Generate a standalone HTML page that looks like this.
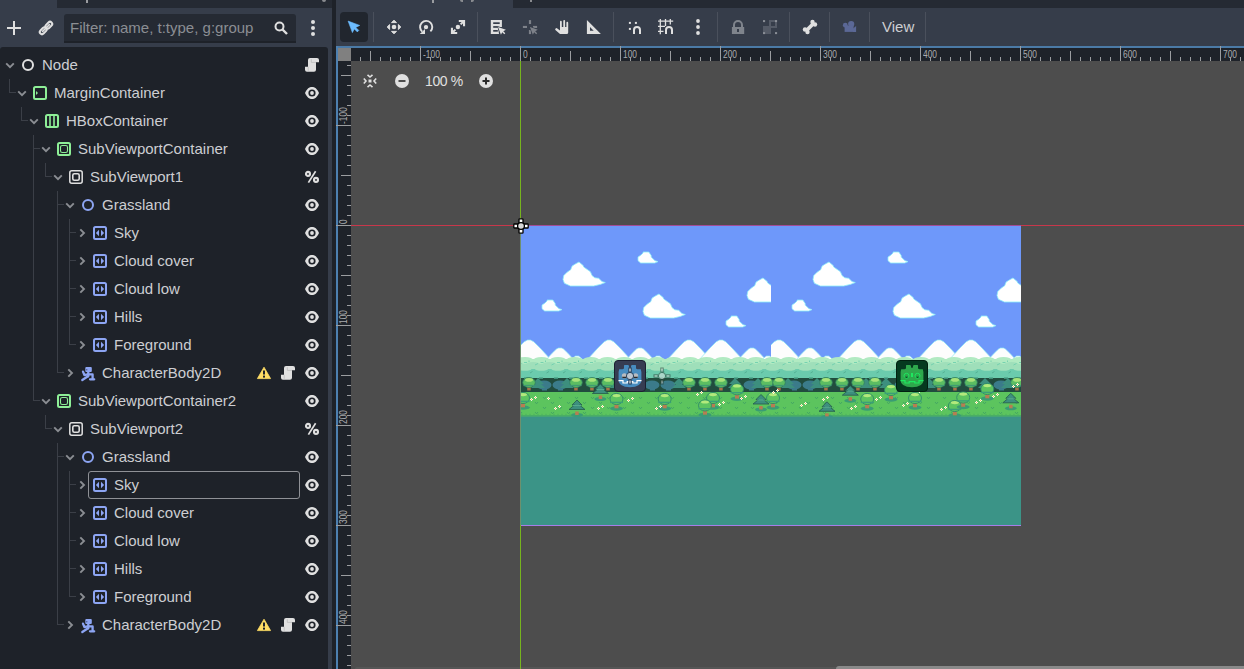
<!DOCTYPE html><html><head><meta charset="utf-8"><style>
*{margin:0;padding:0;box-sizing:border-box}
html,body{width:1244px;height:669px;overflow:hidden;background:#363d4a;font-family:"Liberation Sans", sans-serif}
.ab{position:absolute}
svg{position:absolute;overflow:visible}
.t{position:absolute;white-space:nowrap;color:#cdced2;font-size:15px;line-height:18px}
</style></head><body>
<div class="ab" style="left:57px;top:0;width:275px;height:8px;background:#252a33"></div>
<div class="ab" style="left:86px;top:0;width:2px;height:3px;background:#9a9ca0"></div>
<div class="ab" style="left:322px;top:0;width:4px;height:2px;border-radius:0 0 2px 2px;background:#8a8c90"></div>
<svg style="left:0;top:0" width="1" height="1"><path d="M14 21v14M7 28h14" stroke="#e0e0e0" stroke-width="2"/></svg>
<svg style="left:39px;top:21px" width="14" height="14" viewBox="0 0 14 14"><g stroke-linecap="round" fill="none"><path d="M8.6 5.4L11 3" stroke="#e0e0e0" stroke-width="6.4"/><path d="M8.6 5.4L11 3" stroke="#363d4a" stroke-width="2.4"/><path d="M3 11L5.4 8.6" stroke="#e0e0e0" stroke-width="6.4"/><path d="M3 11L5.4 8.6" stroke="#363d4a" stroke-width="2.4"/><path d="M3.6 10.4L10.4 3.6" stroke="#e0e0e0" stroke-width="1.7"/></g></svg>
<div class="ab" style="left:64px;top:14px;width:232px;height:29px;background:#252a33;border-bottom:2px solid #1e2229;border-radius:3px 3px 0 0"></div>
<div class="t" style="left:70px;top:19px;color:#8b8e93">Filter: name, t:type, g:group</div>
<svg style="left:274px;top:21px" width="14" height="14" viewBox="0 0 14 14"><circle cx="5.5" cy="5.5" r="4" fill="none" stroke="#e0e0e0" stroke-width="2"/><path d="M8.5 8.5l4.5 4.5" stroke="#e0e0e0" stroke-width="2.4"/></svg>
<div class="ab" style="left:311px;top:19.5px;width:4px;height:4px;border-radius:2px;background:#e0e0e0"></div>
<div class="ab" style="left:311px;top:25.5px;width:4px;height:4px;border-radius:2px;background:#e0e0e0"></div>
<div class="ab" style="left:311px;top:31.5px;width:4px;height:4px;border-radius:2px;background:#e0e0e0"></div>
<div class="ab" style="left:0;top:47px;width:328px;height:640px;background:#1e2229;border-radius:3px 3px 0 0"></div>
<div class="ab" style="left:332px;top:0;width:4px;height:669px;background:#1e2229"></div>
<svg style="left:5px;top:61px" width="10" height="8" viewBox="0 0 10 8"><path d="M1.2 2.3l3.8 3.8 3.8-3.8" fill="none" stroke="#8b8e93" stroke-width="1.9"/></svg>
<svg style="left:21px;top:58px" width="14" height="14" viewBox="0 0 14 14"><circle cx="7" cy="7" r="5" fill="none" stroke="#e0e0e0" stroke-width="2"/></svg>
<div class="t" style="left:42px;top:56px">Node</div>
<svg style="left:305px;top:57px" width="14" height="14" viewBox="0 0 14 14"><path d="M3 3a2 2 0 0 1 2-2H12a2 2 0 0 1 2 2V5.2H11V12.7a2 2 0 0 1-2 2H2a2 2 0 0 1-2-2V9.7H3Z" fill="#e0e0e0"/><path d="M6.3 2.2V5.4H11M3.2 9.8V13.8" fill="none" stroke="#b8b8b8" stroke-width="0.7"/></svg>
<svg style="left:17px;top:89px" width="10" height="8" viewBox="0 0 10 8"><path d="M1.2 2.3l3.8 3.8 3.8-3.8" fill="none" stroke="#8b8e93" stroke-width="1.9"/></svg>
<svg style="left:33px;top:86px" width="14" height="14" viewBox="0 0 14 14"><rect x="1" y="1" width="12" height="12" rx="1.5" fill="none" stroke="#8eef97" stroke-width="2"/><path d="M3 5v4l2-2z" fill="#8eef97"/></svg>
<div class="t" style="left:54px;top:84px">MarginContainer</div>
<svg style="left:305px;top:85px" width="14" height="14" viewBox="0 0 14 14"><path d="M0 8C2 3.6 4.2 2 7 2S12 3.6 14 8C12 12.4 9.8 14 7 14S2 12.4 0 8z" fill="#e0e0e0"/><circle cx="7" cy="8" r="3.6" fill="#1e2229"/><circle cx="7" cy="8" r="1.9" fill="#e0e0e0"/></svg>
<svg style="left:29px;top:117px" width="10" height="8" viewBox="0 0 10 8"><path d="M1.2 2.3l3.8 3.8 3.8-3.8" fill="none" stroke="#8b8e93" stroke-width="1.9"/></svg>
<svg style="left:45px;top:114px" width="14" height="14" viewBox="0 0 14 14"><rect x="1" y="1" width="12" height="12" rx="1.5" fill="none" stroke="#8eef97" stroke-width="2"/><path d="M5 2v10M9 2v10" stroke="#8eef97" stroke-width="1.6"/></svg>
<div class="t" style="left:66px;top:112px">HBoxContainer</div>
<svg style="left:305px;top:113px" width="14" height="14" viewBox="0 0 14 14"><path d="M0 8C2 3.6 4.2 2 7 2S12 3.6 14 8C12 12.4 9.8 14 7 14S2 12.4 0 8z" fill="#e0e0e0"/><circle cx="7" cy="8" r="3.6" fill="#1e2229"/><circle cx="7" cy="8" r="1.9" fill="#e0e0e0"/></svg>
<svg style="left:41px;top:145px" width="10" height="8" viewBox="0 0 10 8"><path d="M1.2 2.3l3.8 3.8 3.8-3.8" fill="none" stroke="#8b8e93" stroke-width="1.9"/></svg>
<svg style="left:57px;top:142px" width="14" height="14" viewBox="0 0 14 14"><rect x="1" y="1" width="12" height="12" rx="1.5" fill="none" stroke="#8eef97" stroke-width="2"/><rect x="3.5" y="3.5" width="7" height="7" rx="1.8" fill="none" stroke="#8eef97" stroke-width="1.1"/></svg>
<div class="t" style="left:78px;top:140px">SubViewportContainer</div>
<svg style="left:305px;top:141px" width="14" height="14" viewBox="0 0 14 14"><path d="M0 8C2 3.6 4.2 2 7 2S12 3.6 14 8C12 12.4 9.8 14 7 14S2 12.4 0 8z" fill="#e0e0e0"/><circle cx="7" cy="8" r="3.6" fill="#1e2229"/><circle cx="7" cy="8" r="1.9" fill="#e0e0e0"/></svg>
<svg style="left:53px;top:173px" width="10" height="8" viewBox="0 0 10 8"><path d="M1.2 2.3l3.8 3.8 3.8-3.8" fill="none" stroke="#8b8e93" stroke-width="1.9"/></svg>
<svg style="left:69px;top:170px" width="14" height="14" viewBox="0 0 14 14"><rect x="0.8" y="0.8" width="12.4" height="12.4" rx="2" fill="none" stroke="#e0e0e0" stroke-width="1.5"/><rect x="3.8" y="3.8" width="6.4" height="6.4" rx="1.5" fill="none" stroke="#e0e0e0" stroke-width="1.6"/></svg>
<div class="t" style="left:90px;top:168px">SubViewport1</div>
<svg style="left:305px;top:169px" width="14" height="14" viewBox="0 0 14 14"><g fill="none" stroke="#e0e0e0"><circle cx="3" cy="4.9" r="2" stroke-width="2.1"/><circle cx="11" cy="10.9" r="2" stroke-width="2.1"/><path d="M10.6 2.2L3.4 13.6" stroke-width="1.7"/></g></svg>
<svg style="left:65px;top:201px" width="10" height="8" viewBox="0 0 10 8"><path d="M1.2 2.3l3.8 3.8 3.8-3.8" fill="none" stroke="#8b8e93" stroke-width="1.9"/></svg>
<svg style="left:81px;top:198px" width="14" height="14" viewBox="0 0 14 14"><circle cx="7" cy="7" r="5" fill="none" stroke="#8da5f3" stroke-width="2"/></svg>
<div class="t" style="left:102px;top:196px">Grassland</div>
<svg style="left:305px;top:197px" width="14" height="14" viewBox="0 0 14 14"><path d="M0 8C2 3.6 4.2 2 7 2S12 3.6 14 8C12 12.4 9.8 14 7 14S2 12.4 0 8z" fill="#e0e0e0"/><circle cx="7" cy="8" r="3.6" fill="#1e2229"/><circle cx="7" cy="8" r="1.9" fill="#e0e0e0"/></svg>
<svg style="left:78px;top:228px" width="8" height="10" viewBox="0 0 8 10"><path d="M2.3 1.3l3.7 3.7-3.7 3.7" fill="none" stroke="#8b8e93" stroke-width="1.9"/></svg>
<svg style="left:93px;top:226px" width="14" height="14" viewBox="0 0 14 14"><rect x="1" y="1" width="12" height="12" rx="1.5" fill="none" stroke="#8da5f3" stroke-width="2"/><path d="M6 3.8v6.4L2.9 7zM8 3.8v6.4L11.1 7z" fill="#8da5f3"/></svg>
<div class="t" style="left:114px;top:224px">Sky</div>
<svg style="left:305px;top:225px" width="14" height="14" viewBox="0 0 14 14"><path d="M0 8C2 3.6 4.2 2 7 2S12 3.6 14 8C12 12.4 9.8 14 7 14S2 12.4 0 8z" fill="#e0e0e0"/><circle cx="7" cy="8" r="3.6" fill="#1e2229"/><circle cx="7" cy="8" r="1.9" fill="#e0e0e0"/></svg>
<svg style="left:78px;top:256px" width="8" height="10" viewBox="0 0 8 10"><path d="M2.3 1.3l3.7 3.7-3.7 3.7" fill="none" stroke="#8b8e93" stroke-width="1.9"/></svg>
<svg style="left:93px;top:254px" width="14" height="14" viewBox="0 0 14 14"><rect x="1" y="1" width="12" height="12" rx="1.5" fill="none" stroke="#8da5f3" stroke-width="2"/><path d="M6 3.8v6.4L2.9 7zM8 3.8v6.4L11.1 7z" fill="#8da5f3"/></svg>
<div class="t" style="left:114px;top:252px">Cloud cover</div>
<svg style="left:305px;top:253px" width="14" height="14" viewBox="0 0 14 14"><path d="M0 8C2 3.6 4.2 2 7 2S12 3.6 14 8C12 12.4 9.8 14 7 14S2 12.4 0 8z" fill="#e0e0e0"/><circle cx="7" cy="8" r="3.6" fill="#1e2229"/><circle cx="7" cy="8" r="1.9" fill="#e0e0e0"/></svg>
<svg style="left:78px;top:284px" width="8" height="10" viewBox="0 0 8 10"><path d="M2.3 1.3l3.7 3.7-3.7 3.7" fill="none" stroke="#8b8e93" stroke-width="1.9"/></svg>
<svg style="left:93px;top:282px" width="14" height="14" viewBox="0 0 14 14"><rect x="1" y="1" width="12" height="12" rx="1.5" fill="none" stroke="#8da5f3" stroke-width="2"/><path d="M6 3.8v6.4L2.9 7zM8 3.8v6.4L11.1 7z" fill="#8da5f3"/></svg>
<div class="t" style="left:114px;top:280px">Cloud low</div>
<svg style="left:305px;top:281px" width="14" height="14" viewBox="0 0 14 14"><path d="M0 8C2 3.6 4.2 2 7 2S12 3.6 14 8C12 12.4 9.8 14 7 14S2 12.4 0 8z" fill="#e0e0e0"/><circle cx="7" cy="8" r="3.6" fill="#1e2229"/><circle cx="7" cy="8" r="1.9" fill="#e0e0e0"/></svg>
<svg style="left:78px;top:312px" width="8" height="10" viewBox="0 0 8 10"><path d="M2.3 1.3l3.7 3.7-3.7 3.7" fill="none" stroke="#8b8e93" stroke-width="1.9"/></svg>
<svg style="left:93px;top:310px" width="14" height="14" viewBox="0 0 14 14"><rect x="1" y="1" width="12" height="12" rx="1.5" fill="none" stroke="#8da5f3" stroke-width="2"/><path d="M6 3.8v6.4L2.9 7zM8 3.8v6.4L11.1 7z" fill="#8da5f3"/></svg>
<div class="t" style="left:114px;top:308px">Hills</div>
<svg style="left:305px;top:309px" width="14" height="14" viewBox="0 0 14 14"><path d="M0 8C2 3.6 4.2 2 7 2S12 3.6 14 8C12 12.4 9.8 14 7 14S2 12.4 0 8z" fill="#e0e0e0"/><circle cx="7" cy="8" r="3.6" fill="#1e2229"/><circle cx="7" cy="8" r="1.9" fill="#e0e0e0"/></svg>
<svg style="left:78px;top:340px" width="8" height="10" viewBox="0 0 8 10"><path d="M2.3 1.3l3.7 3.7-3.7 3.7" fill="none" stroke="#8b8e93" stroke-width="1.9"/></svg>
<svg style="left:93px;top:338px" width="14" height="14" viewBox="0 0 14 14"><rect x="1" y="1" width="12" height="12" rx="1.5" fill="none" stroke="#8da5f3" stroke-width="2"/><path d="M6 3.8v6.4L2.9 7zM8 3.8v6.4L11.1 7z" fill="#8da5f3"/></svg>
<div class="t" style="left:114px;top:336px">Foreground</div>
<svg style="left:305px;top:337px" width="14" height="14" viewBox="0 0 14 14"><path d="M0 8C2 3.6 4.2 2 7 2S12 3.6 14 8C12 12.4 9.8 14 7 14S2 12.4 0 8z" fill="#e0e0e0"/><circle cx="7" cy="8" r="3.6" fill="#1e2229"/><circle cx="7" cy="8" r="1.9" fill="#e0e0e0"/></svg>
<svg style="left:66px;top:368px" width="8" height="10" viewBox="0 0 8 10"><path d="M2.3 1.3l3.7 3.7-3.7 3.7" fill="none" stroke="#8b8e93" stroke-width="1.9"/></svg>
<svg style="left:81px;top:366px" width="14" height="14" viewBox="0 0 14 14"><g fill="none" stroke="#8da5f3" stroke-width="2.3" stroke-linecap="round" stroke-linejoin="round"><path d="M2 5.6L3.4 9 7 8.4"/><path d="M7.3 5.5V10.3"/><path d="M7 8.4H11.6V13.3H9M11.6 13.3H13.2"/><path d="M7 10.2L1.3 14"/></g><rect x="4.3" y="0.9" width="6.5" height="5.1" rx="1" fill="#8da5f3"/><rect x="5" y="3" width="1.4" height="1.4" fill="#5a6aa0"/></svg>
<div class="t" style="left:102px;top:364px">CharacterBody2D</div>
<svg style="left:257px;top:365px" width="14" height="14" viewBox="0 0 14 14"><path d="M7 2.2L13.6 13.6H0.4z" fill="#ffdd65" stroke="#ffdd65" stroke-width="0.8" stroke-linejoin="round"/><path d="M7 5.6v4" stroke="#1e2229" stroke-width="2"/><rect x="6" y="10.6" width="2" height="2" fill="#1e2229"/></svg>
<svg style="left:281px;top:365px" width="14" height="14" viewBox="0 0 14 14"><path d="M3 3a2 2 0 0 1 2-2H12a2 2 0 0 1 2 2V5.2H11V12.7a2 2 0 0 1-2 2H2a2 2 0 0 1-2-2V9.7H3Z" fill="#e0e0e0"/><path d="M6.3 2.2V5.4H11M3.2 9.8V13.8" fill="none" stroke="#b8b8b8" stroke-width="0.7"/></svg>
<svg style="left:305px;top:365px" width="14" height="14" viewBox="0 0 14 14"><path d="M0 8C2 3.6 4.2 2 7 2S12 3.6 14 8C12 12.4 9.8 14 7 14S2 12.4 0 8z" fill="#e0e0e0"/><circle cx="7" cy="8" r="3.6" fill="#1e2229"/><circle cx="7" cy="8" r="1.9" fill="#e0e0e0"/></svg>
<svg style="left:41px;top:397px" width="10" height="8" viewBox="0 0 10 8"><path d="M1.2 2.3l3.8 3.8 3.8-3.8" fill="none" stroke="#8b8e93" stroke-width="1.9"/></svg>
<svg style="left:57px;top:394px" width="14" height="14" viewBox="0 0 14 14"><rect x="1" y="1" width="12" height="12" rx="1.5" fill="none" stroke="#8eef97" stroke-width="2"/><rect x="3.5" y="3.5" width="7" height="7" rx="1.8" fill="none" stroke="#8eef97" stroke-width="1.1"/></svg>
<div class="t" style="left:78px;top:392px">SubViewportContainer2</div>
<svg style="left:305px;top:393px" width="14" height="14" viewBox="0 0 14 14"><path d="M0 8C2 3.6 4.2 2 7 2S12 3.6 14 8C12 12.4 9.8 14 7 14S2 12.4 0 8z" fill="#e0e0e0"/><circle cx="7" cy="8" r="3.6" fill="#1e2229"/><circle cx="7" cy="8" r="1.9" fill="#e0e0e0"/></svg>
<svg style="left:53px;top:425px" width="10" height="8" viewBox="0 0 10 8"><path d="M1.2 2.3l3.8 3.8 3.8-3.8" fill="none" stroke="#8b8e93" stroke-width="1.9"/></svg>
<svg style="left:69px;top:422px" width="14" height="14" viewBox="0 0 14 14"><rect x="0.8" y="0.8" width="12.4" height="12.4" rx="2" fill="none" stroke="#e0e0e0" stroke-width="1.5"/><rect x="3.8" y="3.8" width="6.4" height="6.4" rx="1.5" fill="none" stroke="#e0e0e0" stroke-width="1.6"/></svg>
<div class="t" style="left:90px;top:420px">SubViewport2</div>
<svg style="left:305px;top:421px" width="14" height="14" viewBox="0 0 14 14"><g fill="none" stroke="#e0e0e0"><circle cx="3" cy="4.9" r="2" stroke-width="2.1"/><circle cx="11" cy="10.9" r="2" stroke-width="2.1"/><path d="M10.6 2.2L3.4 13.6" stroke-width="1.7"/></g></svg>
<svg style="left:65px;top:453px" width="10" height="8" viewBox="0 0 10 8"><path d="M1.2 2.3l3.8 3.8 3.8-3.8" fill="none" stroke="#8b8e93" stroke-width="1.9"/></svg>
<svg style="left:81px;top:450px" width="14" height="14" viewBox="0 0 14 14"><circle cx="7" cy="7" r="5" fill="none" stroke="#8da5f3" stroke-width="2"/></svg>
<div class="t" style="left:102px;top:448px">Grassland</div>
<svg style="left:305px;top:449px" width="14" height="14" viewBox="0 0 14 14"><path d="M0 8C2 3.6 4.2 2 7 2S12 3.6 14 8C12 12.4 9.8 14 7 14S2 12.4 0 8z" fill="#e0e0e0"/><circle cx="7" cy="8" r="3.6" fill="#1e2229"/><circle cx="7" cy="8" r="1.9" fill="#e0e0e0"/></svg>
<svg style="left:78px;top:480px" width="8" height="10" viewBox="0 0 8 10"><path d="M2.3 1.3l3.7 3.7-3.7 3.7" fill="none" stroke="#8b8e93" stroke-width="1.9"/></svg>
<svg style="left:93px;top:478px" width="14" height="14" viewBox="0 0 14 14"><rect x="1" y="1" width="12" height="12" rx="1.5" fill="none" stroke="#8da5f3" stroke-width="2"/><path d="M6 3.8v6.4L2.9 7zM8 3.8v6.4L11.1 7z" fill="#8da5f3"/></svg>
<div class="t" style="left:114px;top:476px">Sky</div>
<svg style="left:305px;top:477px" width="14" height="14" viewBox="0 0 14 14"><path d="M0 8C2 3.6 4.2 2 7 2S12 3.6 14 8C12 12.4 9.8 14 7 14S2 12.4 0 8z" fill="#e0e0e0"/><circle cx="7" cy="8" r="3.6" fill="#1e2229"/><circle cx="7" cy="8" r="1.9" fill="#e0e0e0"/></svg>
<svg style="left:78px;top:508px" width="8" height="10" viewBox="0 0 8 10"><path d="M2.3 1.3l3.7 3.7-3.7 3.7" fill="none" stroke="#8b8e93" stroke-width="1.9"/></svg>
<svg style="left:93px;top:506px" width="14" height="14" viewBox="0 0 14 14"><rect x="1" y="1" width="12" height="12" rx="1.5" fill="none" stroke="#8da5f3" stroke-width="2"/><path d="M6 3.8v6.4L2.9 7zM8 3.8v6.4L11.1 7z" fill="#8da5f3"/></svg>
<div class="t" style="left:114px;top:504px">Cloud cover</div>
<svg style="left:305px;top:505px" width="14" height="14" viewBox="0 0 14 14"><path d="M0 8C2 3.6 4.2 2 7 2S12 3.6 14 8C12 12.4 9.8 14 7 14S2 12.4 0 8z" fill="#e0e0e0"/><circle cx="7" cy="8" r="3.6" fill="#1e2229"/><circle cx="7" cy="8" r="1.9" fill="#e0e0e0"/></svg>
<svg style="left:78px;top:536px" width="8" height="10" viewBox="0 0 8 10"><path d="M2.3 1.3l3.7 3.7-3.7 3.7" fill="none" stroke="#8b8e93" stroke-width="1.9"/></svg>
<svg style="left:93px;top:534px" width="14" height="14" viewBox="0 0 14 14"><rect x="1" y="1" width="12" height="12" rx="1.5" fill="none" stroke="#8da5f3" stroke-width="2"/><path d="M6 3.8v6.4L2.9 7zM8 3.8v6.4L11.1 7z" fill="#8da5f3"/></svg>
<div class="t" style="left:114px;top:532px">Cloud low</div>
<svg style="left:305px;top:533px" width="14" height="14" viewBox="0 0 14 14"><path d="M0 8C2 3.6 4.2 2 7 2S12 3.6 14 8C12 12.4 9.8 14 7 14S2 12.4 0 8z" fill="#e0e0e0"/><circle cx="7" cy="8" r="3.6" fill="#1e2229"/><circle cx="7" cy="8" r="1.9" fill="#e0e0e0"/></svg>
<svg style="left:78px;top:564px" width="8" height="10" viewBox="0 0 8 10"><path d="M2.3 1.3l3.7 3.7-3.7 3.7" fill="none" stroke="#8b8e93" stroke-width="1.9"/></svg>
<svg style="left:93px;top:562px" width="14" height="14" viewBox="0 0 14 14"><rect x="1" y="1" width="12" height="12" rx="1.5" fill="none" stroke="#8da5f3" stroke-width="2"/><path d="M6 3.8v6.4L2.9 7zM8 3.8v6.4L11.1 7z" fill="#8da5f3"/></svg>
<div class="t" style="left:114px;top:560px">Hills</div>
<svg style="left:305px;top:561px" width="14" height="14" viewBox="0 0 14 14"><path d="M0 8C2 3.6 4.2 2 7 2S12 3.6 14 8C12 12.4 9.8 14 7 14S2 12.4 0 8z" fill="#e0e0e0"/><circle cx="7" cy="8" r="3.6" fill="#1e2229"/><circle cx="7" cy="8" r="1.9" fill="#e0e0e0"/></svg>
<svg style="left:78px;top:592px" width="8" height="10" viewBox="0 0 8 10"><path d="M2.3 1.3l3.7 3.7-3.7 3.7" fill="none" stroke="#8b8e93" stroke-width="1.9"/></svg>
<svg style="left:93px;top:590px" width="14" height="14" viewBox="0 0 14 14"><rect x="1" y="1" width="12" height="12" rx="1.5" fill="none" stroke="#8da5f3" stroke-width="2"/><path d="M6 3.8v6.4L2.9 7zM8 3.8v6.4L11.1 7z" fill="#8da5f3"/></svg>
<div class="t" style="left:114px;top:588px">Foreground</div>
<svg style="left:305px;top:589px" width="14" height="14" viewBox="0 0 14 14"><path d="M0 8C2 3.6 4.2 2 7 2S12 3.6 14 8C12 12.4 9.8 14 7 14S2 12.4 0 8z" fill="#e0e0e0"/><circle cx="7" cy="8" r="3.6" fill="#1e2229"/><circle cx="7" cy="8" r="1.9" fill="#e0e0e0"/></svg>
<svg style="left:66px;top:620px" width="8" height="10" viewBox="0 0 8 10"><path d="M2.3 1.3l3.7 3.7-3.7 3.7" fill="none" stroke="#8b8e93" stroke-width="1.9"/></svg>
<svg style="left:81px;top:618px" width="14" height="14" viewBox="0 0 14 14"><g fill="none" stroke="#8da5f3" stroke-width="2.3" stroke-linecap="round" stroke-linejoin="round"><path d="M2 5.6L3.4 9 7 8.4"/><path d="M7.3 5.5V10.3"/><path d="M7 8.4H11.6V13.3H9M11.6 13.3H13.2"/><path d="M7 10.2L1.3 14"/></g><rect x="4.3" y="0.9" width="6.5" height="5.1" rx="1" fill="#8da5f3"/><rect x="5" y="3" width="1.4" height="1.4" fill="#5a6aa0"/></svg>
<div class="t" style="left:102px;top:616px">CharacterBody2D</div>
<svg style="left:257px;top:617px" width="14" height="14" viewBox="0 0 14 14"><path d="M7 2.2L13.6 13.6H0.4z" fill="#ffdd65" stroke="#ffdd65" stroke-width="0.8" stroke-linejoin="round"/><path d="M7 5.6v4" stroke="#1e2229" stroke-width="2"/><rect x="6" y="10.6" width="2" height="2" fill="#1e2229"/></svg>
<svg style="left:281px;top:617px" width="14" height="14" viewBox="0 0 14 14"><path d="M3 3a2 2 0 0 1 2-2H12a2 2 0 0 1 2 2V5.2H11V12.7a2 2 0 0 1-2 2H2a2 2 0 0 1-2-2V9.7H3Z" fill="#e0e0e0"/><path d="M6.3 2.2V5.4H11M3.2 9.8V13.8" fill="none" stroke="#b8b8b8" stroke-width="0.7"/></svg>
<svg style="left:305px;top:617px" width="14" height="14" viewBox="0 0 14 14"><path d="M0 8C2 3.6 4.2 2 7 2S12 3.6 14 8C12 12.4 9.8 14 7 14S2 12.4 0 8z" fill="#e0e0e0"/><circle cx="7" cy="8" r="3.6" fill="#1e2229"/><circle cx="7" cy="8" r="1.9" fill="#e0e0e0"/></svg>
<div class="ab" style="left:9px;top:79px;width:1px;height:14px;background:#3b3f47"></div>
<div class="ab" style="left:9px;top:92px;width:7px;height:1px;background:#3b3f47"></div>
<div class="ab" style="left:21px;top:107px;width:1px;height:14px;background:#3b3f47"></div>
<div class="ab" style="left:21px;top:120px;width:7px;height:1px;background:#3b3f47"></div>
<div class="ab" style="left:33px;top:135px;width:1px;height:266px;background:#3b3f47"></div>
<div class="ab" style="left:33px;top:148px;width:7px;height:1px;background:#3b3f47"></div>
<div class="ab" style="left:33px;top:400px;width:7px;height:1px;background:#3b3f47"></div>
<div class="ab" style="left:45px;top:163px;width:1px;height:14px;background:#3b3f47"></div>
<div class="ab" style="left:45px;top:176px;width:7px;height:1px;background:#3b3f47"></div>
<div class="ab" style="left:57px;top:191px;width:1px;height:182px;background:#3b3f47"></div>
<div class="ab" style="left:57px;top:204px;width:7px;height:1px;background:#3b3f47"></div>
<div class="ab" style="left:57px;top:372px;width:7px;height:1px;background:#3b3f47"></div>
<div class="ab" style="left:69px;top:219px;width:1px;height:126px;background:#3b3f47"></div>
<div class="ab" style="left:69px;top:232px;width:7px;height:1px;background:#3b3f47"></div>
<div class="ab" style="left:69px;top:260px;width:7px;height:1px;background:#3b3f47"></div>
<div class="ab" style="left:69px;top:288px;width:7px;height:1px;background:#3b3f47"></div>
<div class="ab" style="left:69px;top:316px;width:7px;height:1px;background:#3b3f47"></div>
<div class="ab" style="left:69px;top:344px;width:7px;height:1px;background:#3b3f47"></div>
<div class="ab" style="left:45px;top:415px;width:1px;height:14px;background:#3b3f47"></div>
<div class="ab" style="left:45px;top:428px;width:7px;height:1px;background:#3b3f47"></div>
<div class="ab" style="left:57px;top:443px;width:1px;height:182px;background:#3b3f47"></div>
<div class="ab" style="left:57px;top:456px;width:7px;height:1px;background:#3b3f47"></div>
<div class="ab" style="left:57px;top:624px;width:7px;height:1px;background:#3b3f47"></div>
<div class="ab" style="left:69px;top:471px;width:1px;height:126px;background:#3b3f47"></div>
<div class="ab" style="left:69px;top:484px;width:7px;height:1px;background:#3b3f47"></div>
<div class="ab" style="left:69px;top:512px;width:7px;height:1px;background:#3b3f47"></div>
<div class="ab" style="left:69px;top:540px;width:7px;height:1px;background:#3b3f47"></div>
<div class="ab" style="left:69px;top:568px;width:7px;height:1px;background:#3b3f47"></div>
<div class="ab" style="left:69px;top:596px;width:7px;height:1px;background:#3b3f47"></div>
<div class="ab" style="left:88px;top:471px;width:212px;height:28px;border:1px solid #8f9196;border-radius:3px"></div>
<div class="ab" style="left:513px;top:0;width:731px;height:8px;background:#252a33"></div>
<div class="ab" style="left:432px;top:0;width:2px;height:3px;background:#9a9ca0"></div>
<div class="ab" style="left:460px;top:0;width:3px;height:2px;border-radius:0 0 0 2px;background:#8a8c90"></div>
<div class="ab" style="left:471px;top:0;width:3px;height:2px;border-radius:0 0 2px 0;background:#8a8c90"></div>
<div class="ab" style="left:530px;top:0;width:2px;height:2px;background:#8a8c90"></div>
<div class="ab" style="left:340px;top:12px;width:28px;height:30px;background:#21262e;border-radius:4px"></div>
<div class="ab" style="left:373px;top:12px;width:1px;height:30px;background:#4a505c"></div>
<div class="ab" style="left:477px;top:12px;width:1px;height:30px;background:#4a505c"></div>
<div class="ab" style="left:613px;top:12px;width:1px;height:30px;background:#4a505c"></div>
<div class="ab" style="left:717px;top:12px;width:1px;height:30px;background:#4a505c"></div>
<div class="ab" style="left:789px;top:12px;width:1px;height:30px;background:#4a505c"></div>
<div class="ab" style="left:829px;top:12px;width:1px;height:30px;background:#4a505c"></div>
<div class="ab" style="left:869px;top:12px;width:1px;height:30px;background:#4a505c"></div>
<div class="ab" style="left:925px;top:12px;width:1px;height:30px;background:#4a505c"></div>
<div class="t" style="left:882px;top:18px;font-size:15px;color:#cdced2">View</div>
<svg style="left:346px;top:19px" width="16" height="16" viewBox="0 0 16 16"><path d="M2.1 2.1L13.7 6.4 9.8 8.4 12.8 11.4 11.3 12.9 8.3 9.9 6.4 13.6z" fill="#6cbcff" stroke="#6cbcff" stroke-width="0.6" stroke-linejoin="round"/></svg>
<svg style="left:386px;top:19px" width="16" height="16" viewBox="0 0 16 16"><g fill="#e0e0e0" stroke="#e0e0e0" stroke-width="1" stroke-linejoin="round"><path d="M8 1.3L10.5 3.6H5.5z"/><path d="M8 14.7L10.5 12.4H5.5z"/><path d="M1.3 8L3.6 5.5V10.5z"/><path d="M14.7 8L12.4 5.5V10.5z"/></g><circle cx="8" cy="8" r="2.3" fill="#e0e0e0"/></svg>
<svg style="left:418px;top:19px" width="16" height="16" viewBox="0 0 16 16"><path d="M4.2 12.6A6.1 6.1 0 1 1 12.4 12.4" fill="none" stroke="#e0e0e0" stroke-width="1.9"/><path d="M1.8 15.1H7V10z" fill="#e0e0e0"/><circle cx="8" cy="8.1" r="2.2" fill="#e0e0e0"/></svg>
<svg style="left:450px;top:19px" width="16" height="16" viewBox="0 0 16 16"><path d="M8.8 0.9H15.1V7.2H13V4.4L11.3 6.1 9.9 4.7 11.6 3H8.8Z" fill="#e0e0e0"/><path d="M7.2 15.1H0.9V8.8H3V11.6L4.7 9.9 6.1 11.3 4.4 13H7.2Z" fill="#e0e0e0"/><circle cx="7.9" cy="8" r="2.2" fill="#e0e0e0"/></svg>
<svg style="left:490px;top:19px" width="16" height="16" viewBox="0 0 16 16"><path d="M0.8 0.9H11.9V7.9H8L9 15.1H0.8z" fill="#e0e0e0"/><g fill="#363d4a"><rect x="3.2" y="3.3" width="6.5" height="1.7"/><rect x="3.2" y="7.1" width="4.6" height="1.7"/><rect x="3.2" y="11" width="4.6" height="1.7"/></g><path transform="translate(6.6 6.5) scale(0.68)" d="M2.1 2.1L13.7 6.4 9.8 8.4 12.8 11.4 11.3 12.9 8.3 9.9 6.4 13.6z" fill="#e0e0e0" stroke="#363d4a" stroke-width="1.8" stroke-linejoin="round" paint-order="stroke"/></svg>
<svg style="left:522px;top:19px" width="16" height="16" viewBox="0 0 16 16"><g fill="#7d8189"><rect x="6.9" y="1.1" width="2.2" height="3.9"/><rect x="0.9" y="6.9" width="4.1" height="2.1"/><rect x="11" y="6.9" width="4.1" height="2.1"/><rect x="6.9" y="11" width="2.2" height="4.1"/></g><path transform="translate(6.5 6.5) scale(0.68)" d="M2.1 2.1L13.7 6.4 9.8 8.4 12.8 11.4 11.3 12.9 8.3 9.9 6.4 13.6z" fill="#7d8189" stroke="#363d4a" stroke-width="1.8" stroke-linejoin="round" paint-order="stroke"/></svg>
<svg style="left:554px;top:19px" width="16" height="16" viewBox="0 0 16 16"><path d="M6 15.1L1.4 10.9Q0.8 10.1 1.6 9.4Q2.5 8.7 3.3 9.4L6 11.6V2.7a0.9 0.9 0 0 1 1.8 0V8H9.3V1.8a0.9 0.9 0 0 1 1.8 0V8H12.4V3.7a0.9 0.9 0 0 1 1.8 0V13.6Q14.2 15.1 12.6 15.1Z" fill="#e0e0e0"/></svg>
<svg style="left:586px;top:19px" width="16" height="16" viewBox="0 0 16 16"><path d="M0.9 0.9V15.1H14.9ZM4 7.9L7.7 11.7H4Z" fill="#e0e0e0" fill-rule="evenodd"/></svg>
<svg style="left:627px;top:19px" width="16" height="16" viewBox="0 0 16 16"><g fill="#e0e0e0"><rect x="1.9" y="2.9" width="2" height="2"/><rect x="7.9" y="2.9" width="2" height="2"/><rect x="1.9" y="8.9" width="2" height="2"/></g><path d="M6 15V11a4 4 0 0 1 8 0V15H12 V11a2 2 0 0 0-4 0V15z" fill="#e0e0e0"/></svg>
<svg style="left:658px;top:19px" width="16" height="16" viewBox="0 0 16 16"><g stroke="#e0e0e0" stroke-width="1.3"><path d="M2.3 0v15.2M7.5 0v7M12.3 0v5.5M0 2.1h15.2M0 7.3h7M0 12.4h5.5"/></g><path d="M7 15V11a4 4 0 0 1 8 0V15H13 V11a2 2 0 0 0-4 0V15z" fill="#e0e0e0"/></svg>
<svg style="left:690px;top:19px" width="16" height="16" viewBox="0 0 16 16"><g fill="#e0e0e0"><circle cx="8" cy="2" r="1.9"/><circle cx="8" cy="8" r="1.9"/><circle cx="8" cy="14" r="1.9"/></g></svg>
<svg style="left:730px;top:19px" width="16" height="16" viewBox="0 0 16 16"><path d="M4 8.5V6a4 4 0 0 1 8 0V8.5" fill="none" stroke="#7f848c" stroke-width="2"/><path d="M1.9 8H14.2V15.1H1.9ZM7 10V13H9V10Z" fill="#7f848c" fill-rule="evenodd"/></svg>
<svg style="left:762px;top:19px" width="16" height="16" viewBox="0 0 16 16"><rect x="1" y="7" width="8" height="8" fill="#555b67"/><rect x="8" y="2" width="6" height="6" fill="none" stroke="#555b67" stroke-width="2"/><g fill="#8a8e96"><rect x="1" y="1.1" width="2.1" height="2"/><rect x="13" y="1.1" width="2.1" height="2"/><rect x="1" y="13.1" width="2.1" height="2"/><rect x="13" y="13.1" width="2.1" height="2"/></g></svg>
<svg style="left:802px;top:19px" width="16" height="16" viewBox="0 0 16 16"><path d="M4.5 11.5L11.5 4.5" stroke="#e0e0e0" stroke-width="3.8"/><g fill="#e0e0e0"><circle cx="3" cy="10.5" r="2.2"/><circle cx="5.5" cy="13" r="2.2"/><circle cx="10.5" cy="3" r="2.2"/><circle cx="13" cy="5.5" r="2.2"/></g></svg>
<svg style="left:842px;top:19px" width="16" height="16" viewBox="0 0 16 16"><g fill="#5b6896"><circle cx="3.3" cy="6.2" r="2.4"/><circle cx="9.2" cy="5" r="3.1"/><rect x="2.6" y="6.6" width="9" height="6.3"/><path d="M11 9.5L14.1 7V12.9H11z"/></g></svg>
<div class="ab" style="left:336px;top:46px;width:908px;height:2px;background:#4b7aa6"></div>
<div class="ab" style="left:336px;top:46px;width:2px;height:623px;background:#4d80b0"></div>
<div class="ab" style="left:338px;top:48px;width:13px;height:13px;background:#808080"></div>
<div class="ab" style="left:351px;top:48px;width:893px;height:13px;background:#1e2229"></div>
<div class="ab" style="left:338px;top:61px;width:13px;height:608px;background:#1e2229"></div>
<div class="ab" style="left:351px;top:61px;width:893px;height:608px;background:#4d4d4d"></div>
<div class="ab" style="left:360px;top:57px;width:1px;height:4px;background:#9b9da0"></div>
<div class="ab" style="left:370px;top:51px;width:1px;height:10px;background:#9b9da0"></div>
<div class="ab" style="left:380px;top:57px;width:1px;height:4px;background:#9b9da0"></div>
<div class="ab" style="left:390px;top:57px;width:1px;height:4px;background:#9b9da0"></div>
<div class="ab" style="left:400px;top:57px;width:1px;height:4px;background:#9b9da0"></div>
<div class="ab" style="left:410px;top:57px;width:1px;height:4px;background:#9b9da0"></div>
<div class="ab" style="left:420px;top:46px;width:1px;height:15px;background:#9b9da0"></div>
<div class="ab" style="left:423px;top:49px;font-size:10px;line-height:12px;color:#a9abae;transform:scaleX(0.84);transform-origin:0 0">-100</div>
<div class="ab" style="left:430px;top:57px;width:1px;height:4px;background:#9b9da0"></div>
<div class="ab" style="left:440px;top:57px;width:1px;height:4px;background:#9b9da0"></div>
<div class="ab" style="left:450px;top:57px;width:1px;height:4px;background:#9b9da0"></div>
<div class="ab" style="left:460px;top:57px;width:1px;height:4px;background:#9b9da0"></div>
<div class="ab" style="left:470px;top:51px;width:1px;height:10px;background:#9b9da0"></div>
<div class="ab" style="left:480px;top:57px;width:1px;height:4px;background:#9b9da0"></div>
<div class="ab" style="left:490px;top:57px;width:1px;height:4px;background:#9b9da0"></div>
<div class="ab" style="left:500px;top:57px;width:1px;height:4px;background:#9b9da0"></div>
<div class="ab" style="left:510px;top:57px;width:1px;height:4px;background:#9b9da0"></div>
<div class="ab" style="left:520px;top:46px;width:1px;height:15px;background:#9b9da0"></div>
<div class="ab" style="left:523px;top:49px;font-size:10px;line-height:12px;color:#a9abae;transform:scaleX(0.84);transform-origin:0 0">0</div>
<div class="ab" style="left:530px;top:57px;width:1px;height:4px;background:#9b9da0"></div>
<div class="ab" style="left:540px;top:57px;width:1px;height:4px;background:#9b9da0"></div>
<div class="ab" style="left:550px;top:57px;width:1px;height:4px;background:#9b9da0"></div>
<div class="ab" style="left:560px;top:57px;width:1px;height:4px;background:#9b9da0"></div>
<div class="ab" style="left:570px;top:51px;width:1px;height:10px;background:#9b9da0"></div>
<div class="ab" style="left:580px;top:57px;width:1px;height:4px;background:#9b9da0"></div>
<div class="ab" style="left:590px;top:57px;width:1px;height:4px;background:#9b9da0"></div>
<div class="ab" style="left:600px;top:57px;width:1px;height:4px;background:#9b9da0"></div>
<div class="ab" style="left:610px;top:57px;width:1px;height:4px;background:#9b9da0"></div>
<div class="ab" style="left:620px;top:46px;width:1px;height:15px;background:#9b9da0"></div>
<div class="ab" style="left:623px;top:49px;font-size:10px;line-height:12px;color:#a9abae;transform:scaleX(0.84);transform-origin:0 0">100</div>
<div class="ab" style="left:630px;top:57px;width:1px;height:4px;background:#9b9da0"></div>
<div class="ab" style="left:640px;top:57px;width:1px;height:4px;background:#9b9da0"></div>
<div class="ab" style="left:650px;top:57px;width:1px;height:4px;background:#9b9da0"></div>
<div class="ab" style="left:660px;top:57px;width:1px;height:4px;background:#9b9da0"></div>
<div class="ab" style="left:670px;top:51px;width:1px;height:10px;background:#9b9da0"></div>
<div class="ab" style="left:680px;top:57px;width:1px;height:4px;background:#9b9da0"></div>
<div class="ab" style="left:690px;top:57px;width:1px;height:4px;background:#9b9da0"></div>
<div class="ab" style="left:700px;top:57px;width:1px;height:4px;background:#9b9da0"></div>
<div class="ab" style="left:710px;top:57px;width:1px;height:4px;background:#9b9da0"></div>
<div class="ab" style="left:720px;top:46px;width:1px;height:15px;background:#9b9da0"></div>
<div class="ab" style="left:723px;top:49px;font-size:10px;line-height:12px;color:#a9abae;transform:scaleX(0.84);transform-origin:0 0">200</div>
<div class="ab" style="left:730px;top:57px;width:1px;height:4px;background:#9b9da0"></div>
<div class="ab" style="left:740px;top:57px;width:1px;height:4px;background:#9b9da0"></div>
<div class="ab" style="left:750px;top:57px;width:1px;height:4px;background:#9b9da0"></div>
<div class="ab" style="left:760px;top:57px;width:1px;height:4px;background:#9b9da0"></div>
<div class="ab" style="left:770px;top:51px;width:1px;height:10px;background:#9b9da0"></div>
<div class="ab" style="left:780px;top:57px;width:1px;height:4px;background:#9b9da0"></div>
<div class="ab" style="left:790px;top:57px;width:1px;height:4px;background:#9b9da0"></div>
<div class="ab" style="left:800px;top:57px;width:1px;height:4px;background:#9b9da0"></div>
<div class="ab" style="left:810px;top:57px;width:1px;height:4px;background:#9b9da0"></div>
<div class="ab" style="left:820px;top:46px;width:1px;height:15px;background:#9b9da0"></div>
<div class="ab" style="left:823px;top:49px;font-size:10px;line-height:12px;color:#a9abae;transform:scaleX(0.84);transform-origin:0 0">300</div>
<div class="ab" style="left:830px;top:57px;width:1px;height:4px;background:#9b9da0"></div>
<div class="ab" style="left:840px;top:57px;width:1px;height:4px;background:#9b9da0"></div>
<div class="ab" style="left:850px;top:57px;width:1px;height:4px;background:#9b9da0"></div>
<div class="ab" style="left:860px;top:57px;width:1px;height:4px;background:#9b9da0"></div>
<div class="ab" style="left:870px;top:51px;width:1px;height:10px;background:#9b9da0"></div>
<div class="ab" style="left:880px;top:57px;width:1px;height:4px;background:#9b9da0"></div>
<div class="ab" style="left:890px;top:57px;width:1px;height:4px;background:#9b9da0"></div>
<div class="ab" style="left:900px;top:57px;width:1px;height:4px;background:#9b9da0"></div>
<div class="ab" style="left:910px;top:57px;width:1px;height:4px;background:#9b9da0"></div>
<div class="ab" style="left:920px;top:46px;width:1px;height:15px;background:#9b9da0"></div>
<div class="ab" style="left:923px;top:49px;font-size:10px;line-height:12px;color:#a9abae;transform:scaleX(0.84);transform-origin:0 0">400</div>
<div class="ab" style="left:930px;top:57px;width:1px;height:4px;background:#9b9da0"></div>
<div class="ab" style="left:940px;top:57px;width:1px;height:4px;background:#9b9da0"></div>
<div class="ab" style="left:950px;top:57px;width:1px;height:4px;background:#9b9da0"></div>
<div class="ab" style="left:960px;top:57px;width:1px;height:4px;background:#9b9da0"></div>
<div class="ab" style="left:970px;top:51px;width:1px;height:10px;background:#9b9da0"></div>
<div class="ab" style="left:980px;top:57px;width:1px;height:4px;background:#9b9da0"></div>
<div class="ab" style="left:990px;top:57px;width:1px;height:4px;background:#9b9da0"></div>
<div class="ab" style="left:1000px;top:57px;width:1px;height:4px;background:#9b9da0"></div>
<div class="ab" style="left:1010px;top:57px;width:1px;height:4px;background:#9b9da0"></div>
<div class="ab" style="left:1020px;top:46px;width:1px;height:15px;background:#9b9da0"></div>
<div class="ab" style="left:1023px;top:49px;font-size:10px;line-height:12px;color:#a9abae;transform:scaleX(0.84);transform-origin:0 0">500</div>
<div class="ab" style="left:1030px;top:57px;width:1px;height:4px;background:#9b9da0"></div>
<div class="ab" style="left:1040px;top:57px;width:1px;height:4px;background:#9b9da0"></div>
<div class="ab" style="left:1050px;top:57px;width:1px;height:4px;background:#9b9da0"></div>
<div class="ab" style="left:1060px;top:57px;width:1px;height:4px;background:#9b9da0"></div>
<div class="ab" style="left:1070px;top:51px;width:1px;height:10px;background:#9b9da0"></div>
<div class="ab" style="left:1080px;top:57px;width:1px;height:4px;background:#9b9da0"></div>
<div class="ab" style="left:1090px;top:57px;width:1px;height:4px;background:#9b9da0"></div>
<div class="ab" style="left:1100px;top:57px;width:1px;height:4px;background:#9b9da0"></div>
<div class="ab" style="left:1110px;top:57px;width:1px;height:4px;background:#9b9da0"></div>
<div class="ab" style="left:1120px;top:46px;width:1px;height:15px;background:#9b9da0"></div>
<div class="ab" style="left:1123px;top:49px;font-size:10px;line-height:12px;color:#a9abae;transform:scaleX(0.84);transform-origin:0 0">600</div>
<div class="ab" style="left:1130px;top:57px;width:1px;height:4px;background:#9b9da0"></div>
<div class="ab" style="left:1140px;top:57px;width:1px;height:4px;background:#9b9da0"></div>
<div class="ab" style="left:1150px;top:57px;width:1px;height:4px;background:#9b9da0"></div>
<div class="ab" style="left:1160px;top:57px;width:1px;height:4px;background:#9b9da0"></div>
<div class="ab" style="left:1170px;top:51px;width:1px;height:10px;background:#9b9da0"></div>
<div class="ab" style="left:1180px;top:57px;width:1px;height:4px;background:#9b9da0"></div>
<div class="ab" style="left:1190px;top:57px;width:1px;height:4px;background:#9b9da0"></div>
<div class="ab" style="left:1200px;top:57px;width:1px;height:4px;background:#9b9da0"></div>
<div class="ab" style="left:1210px;top:57px;width:1px;height:4px;background:#9b9da0"></div>
<div class="ab" style="left:1220px;top:46px;width:1px;height:15px;background:#9b9da0"></div>
<div class="ab" style="left:1223px;top:49px;font-size:10px;line-height:12px;color:#a9abae;transform:scaleX(0.84);transform-origin:0 0">700</div>
<div class="ab" style="left:1230px;top:57px;width:1px;height:4px;background:#9b9da0"></div>
<div class="ab" style="left:1240px;top:57px;width:1px;height:4px;background:#9b9da0"></div>
<div class="ab" style="left:347px;top:65px;width:4px;height:1px;background:#9b9da0"></div>
<div class="ab" style="left:341px;top:75px;width:10px;height:1px;background:#9b9da0"></div>
<div class="ab" style="left:347px;top:85px;width:4px;height:1px;background:#9b9da0"></div>
<div class="ab" style="left:347px;top:95px;width:4px;height:1px;background:#9b9da0"></div>
<div class="ab" style="left:347px;top:105px;width:4px;height:1px;background:#9b9da0"></div>
<div class="ab" style="left:347px;top:115px;width:4px;height:1px;background:#9b9da0"></div>
<div class="ab" style="left:336px;top:125px;width:15px;height:1px;background:#9b9da0"></div>
<div class="ab" style="left:338px;top:124px;font-size:10px;line-height:12px;color:#a9abae;transform:rotate(-90deg) scaleX(0.84);transform-origin:0 0">-100</div>
<div class="ab" style="left:347px;top:135px;width:4px;height:1px;background:#9b9da0"></div>
<div class="ab" style="left:347px;top:145px;width:4px;height:1px;background:#9b9da0"></div>
<div class="ab" style="left:347px;top:155px;width:4px;height:1px;background:#9b9da0"></div>
<div class="ab" style="left:347px;top:165px;width:4px;height:1px;background:#9b9da0"></div>
<div class="ab" style="left:341px;top:175px;width:10px;height:1px;background:#9b9da0"></div>
<div class="ab" style="left:347px;top:185px;width:4px;height:1px;background:#9b9da0"></div>
<div class="ab" style="left:347px;top:195px;width:4px;height:1px;background:#9b9da0"></div>
<div class="ab" style="left:347px;top:205px;width:4px;height:1px;background:#9b9da0"></div>
<div class="ab" style="left:347px;top:215px;width:4px;height:1px;background:#9b9da0"></div>
<div class="ab" style="left:336px;top:225px;width:15px;height:1px;background:#9b9da0"></div>
<div class="ab" style="left:338px;top:224px;font-size:10px;line-height:12px;color:#a9abae;transform:rotate(-90deg) scaleX(0.84);transform-origin:0 0">0</div>
<div class="ab" style="left:347px;top:235px;width:4px;height:1px;background:#9b9da0"></div>
<div class="ab" style="left:347px;top:245px;width:4px;height:1px;background:#9b9da0"></div>
<div class="ab" style="left:347px;top:255px;width:4px;height:1px;background:#9b9da0"></div>
<div class="ab" style="left:347px;top:265px;width:4px;height:1px;background:#9b9da0"></div>
<div class="ab" style="left:341px;top:275px;width:10px;height:1px;background:#9b9da0"></div>
<div class="ab" style="left:347px;top:285px;width:4px;height:1px;background:#9b9da0"></div>
<div class="ab" style="left:347px;top:295px;width:4px;height:1px;background:#9b9da0"></div>
<div class="ab" style="left:347px;top:305px;width:4px;height:1px;background:#9b9da0"></div>
<div class="ab" style="left:347px;top:315px;width:4px;height:1px;background:#9b9da0"></div>
<div class="ab" style="left:336px;top:325px;width:15px;height:1px;background:#9b9da0"></div>
<div class="ab" style="left:338px;top:324px;font-size:10px;line-height:12px;color:#a9abae;transform:rotate(-90deg) scaleX(0.84);transform-origin:0 0">100</div>
<div class="ab" style="left:347px;top:335px;width:4px;height:1px;background:#9b9da0"></div>
<div class="ab" style="left:347px;top:345px;width:4px;height:1px;background:#9b9da0"></div>
<div class="ab" style="left:347px;top:355px;width:4px;height:1px;background:#9b9da0"></div>
<div class="ab" style="left:347px;top:365px;width:4px;height:1px;background:#9b9da0"></div>
<div class="ab" style="left:341px;top:375px;width:10px;height:1px;background:#9b9da0"></div>
<div class="ab" style="left:347px;top:385px;width:4px;height:1px;background:#9b9da0"></div>
<div class="ab" style="left:347px;top:395px;width:4px;height:1px;background:#9b9da0"></div>
<div class="ab" style="left:347px;top:405px;width:4px;height:1px;background:#9b9da0"></div>
<div class="ab" style="left:347px;top:415px;width:4px;height:1px;background:#9b9da0"></div>
<div class="ab" style="left:336px;top:425px;width:15px;height:1px;background:#9b9da0"></div>
<div class="ab" style="left:338px;top:424px;font-size:10px;line-height:12px;color:#a9abae;transform:rotate(-90deg) scaleX(0.84);transform-origin:0 0">200</div>
<div class="ab" style="left:347px;top:435px;width:4px;height:1px;background:#9b9da0"></div>
<div class="ab" style="left:347px;top:445px;width:4px;height:1px;background:#9b9da0"></div>
<div class="ab" style="left:347px;top:455px;width:4px;height:1px;background:#9b9da0"></div>
<div class="ab" style="left:347px;top:465px;width:4px;height:1px;background:#9b9da0"></div>
<div class="ab" style="left:341px;top:475px;width:10px;height:1px;background:#9b9da0"></div>
<div class="ab" style="left:347px;top:485px;width:4px;height:1px;background:#9b9da0"></div>
<div class="ab" style="left:347px;top:495px;width:4px;height:1px;background:#9b9da0"></div>
<div class="ab" style="left:347px;top:505px;width:4px;height:1px;background:#9b9da0"></div>
<div class="ab" style="left:347px;top:515px;width:4px;height:1px;background:#9b9da0"></div>
<div class="ab" style="left:336px;top:525px;width:15px;height:1px;background:#9b9da0"></div>
<div class="ab" style="left:338px;top:524px;font-size:10px;line-height:12px;color:#a9abae;transform:rotate(-90deg) scaleX(0.84);transform-origin:0 0">300</div>
<div class="ab" style="left:347px;top:535px;width:4px;height:1px;background:#9b9da0"></div>
<div class="ab" style="left:347px;top:545px;width:4px;height:1px;background:#9b9da0"></div>
<div class="ab" style="left:347px;top:555px;width:4px;height:1px;background:#9b9da0"></div>
<div class="ab" style="left:347px;top:565px;width:4px;height:1px;background:#9b9da0"></div>
<div class="ab" style="left:341px;top:575px;width:10px;height:1px;background:#9b9da0"></div>
<div class="ab" style="left:347px;top:585px;width:4px;height:1px;background:#9b9da0"></div>
<div class="ab" style="left:347px;top:595px;width:4px;height:1px;background:#9b9da0"></div>
<div class="ab" style="left:347px;top:605px;width:4px;height:1px;background:#9b9da0"></div>
<div class="ab" style="left:347px;top:615px;width:4px;height:1px;background:#9b9da0"></div>
<div class="ab" style="left:336px;top:625px;width:15px;height:1px;background:#9b9da0"></div>
<div class="ab" style="left:338px;top:624px;font-size:10px;line-height:12px;color:#a9abae;transform:rotate(-90deg) scaleX(0.84);transform-origin:0 0">400</div>
<div class="ab" style="left:347px;top:635px;width:4px;height:1px;background:#9b9da0"></div>
<div class="ab" style="left:347px;top:645px;width:4px;height:1px;background:#9b9da0"></div>
<div class="ab" style="left:347px;top:655px;width:4px;height:1px;background:#9b9da0"></div>
<div class="ab" style="left:347px;top:665px;width:4px;height:1px;background:#9b9da0"></div>
<svg style="left:363px;top:74px" width="14" height="14" viewBox="0 0 14 14"><g fill="none" stroke="#e0e0e0" stroke-width="1.6"><path d="M4.5 0.8L7 3 9.5 0.8M4.5 13.2L7 11 9.5 13.2M0.8 4.5L3 7 0.8 9.5M13.2 4.5L11 7 13.2 9.5"/></g><rect x="5.5" y="5.5" width="3" height="3" fill="#e0e0e0"/></svg>
<svg style="left:395px;top:74px" width="14" height="14" viewBox="0 0 14 14"><circle cx="7" cy="7" r="7" fill="#e0e0e0"/><path d="M3.5 7h7" stroke="#4d4d4d" stroke-width="2"/></svg>
<div class="t" style="left:425px;top:72px;font-size:14px;letter-spacing:-0.4px;color:#e0e0e0">100 %</div>
<svg style="left:479px;top:74px" width="14" height="14" viewBox="0 0 14 14"><circle cx="7" cy="7" r="7" fill="#e0e0e0"/><path d="M3.5 7h7M7 3.5v7" stroke="#2a2a2a" stroke-width="2"/></svg>
<div class="ab" style="left:355px;top:667px;width:500px;height:4px;background:#565656;border-radius:2px 0 0 0"></div>
<div class="ab" style="left:836px;top:666px;width:408px;height:6px;background:#8a8a8a;border-radius:3px 0 0 0"></div>
<svg style="left:521px;top:226px;overflow:hidden" width="500" height="299" viewBox="0 0 500 299"><defs><path id="cb" d="M16 0L20.2 3.6 20.7 5 27.4 9.7 29 13.5 31.8 15.8 35.7 16.3 39 19.6 42.3 20.5 37.3 22.4 30.7 24 7.5 24 1.4 21.3 0 17.4 0.8 13.5 4.1 10.2 7.7 7.7 9.1 4.1 12.4 1.9z" fill="#fff" stroke="#8ef0f8" stroke-width="0.8"/><path id="cs" d="M5.1 0L10.8 0 13.2 3.6 13.2 5.1 17 8.7 20 9.6 16.7 11 2.7 11 0 8.7 0 5.1 3 3 5.1 0.9z" fill="#fff" stroke="#8ef0f8" stroke-width="0.8"/><clipPath id="t1"><rect x="0" y="0" width="250" height="299"/></clipPath><clipPath id="t2"><rect x="250" y="0" width="250" height="299"/></clipPath></defs><rect x="0" y="0" width="500" height="299" fill="#6e98fa"/><g clip-path="url(#t1)"><g transform="translate(0 0)"><use href="#cb" x="42" y="36"/><use href="#cs" x="117" y="26"/><use href="#cs" x="21" y="74"/><use href="#cb" x="122" y="68"/><use href="#cs" x="205" y="90"/><use href="#cb" x="226" y="52"/></g></g><g clip-path="url(#t2)"><g transform="translate(250 0)"><use href="#cb" x="42" y="36"/><use href="#cs" x="117" y="26"/><use href="#cs" x="21" y="74"/><use href="#cb" x="122" y="68"/><use href="#cs" x="205" y="90"/><use href="#cb" x="226" y="52"/></g></g><g clip-path="url(#t1)" fill="#fdfdfd" stroke="#8eeaf2" stroke-width="0.7"><g transform="translate(0 0)"><polygon points="-15.0,135.0 -3.5,122.4 3.3,115.7 6.5,114.0 9.5,114.0 12.7,115.7 19.5,122.4 31.0,135.0"/><polygon points="65.0,135.0 76.5,122.4 83.3,115.7 86.5,114.0 89.5,114.0 92.7,115.7 99.5,122.4 111.0,135.0"/><polygon points="145.0,135.0 156.6,122.4 163.3,115.7 166.5,114.0 169.5,114.0 172.7,115.7 179.4,122.4 191.0,135.0"/><polygon points="177.0,135.0 188.6,122.4 195.3,115.7 198.5,114.0 201.5,114.0 204.7,115.7 211.4,122.4 223.0,135.0"/><polygon points="24.0,135.0 31.1,127.2 35.5,123.0 37.5,122.0 40.5,122.0 42.5,123.0 46.9,127.2 54.0,135.0"/><polygon points="104.0,135.0 111.2,127.2 115.5,123.0 117.5,122.0 120.5,122.0 122.5,123.0 126.8,127.2 134.0,135.0"/><polygon points="216.0,135.0 223.2,127.2 227.6,123.0 229.5,122.0 232.5,122.0 234.4,123.0 238.8,127.2 246.0,135.0"/><polygon points="49.0,135.0 51.8,132.0 53.8,130.4 54.5,130.0 57.5,130.0 58.2,130.4 60.2,132.0 63.0,135.0"/><polygon points="130.0,135.0 132.8,132.0 134.8,130.4 135.5,130.0 138.5,130.0 139.2,130.4 141.2,132.0 144.0,135.0"/><polygon points="240.0,135.0 242.8,132.0 244.8,130.4 245.5,130.0 248.5,130.0 249.2,130.4 251.2,132.0 254.0,135.0"/></g></g><g clip-path="url(#t2)" fill="#fdfdfd" stroke="#8eeaf2" stroke-width="0.7"><g transform="translate(250 0)"><polygon points="-15.0,135.0 -3.5,122.4 3.3,115.7 6.5,114.0 9.5,114.0 12.7,115.7 19.5,122.4 31.0,135.0"/><polygon points="65.0,135.0 76.5,122.4 83.3,115.7 86.5,114.0 89.5,114.0 92.7,115.7 99.5,122.4 111.0,135.0"/><polygon points="145.0,135.0 156.6,122.4 163.3,115.7 166.5,114.0 169.5,114.0 172.7,115.7 179.4,122.4 191.0,135.0"/><polygon points="177.0,135.0 188.6,122.4 195.3,115.7 198.5,114.0 201.5,114.0 204.7,115.7 211.4,122.4 223.0,135.0"/><polygon points="24.0,135.0 31.1,127.2 35.5,123.0 37.5,122.0 40.5,122.0 42.5,123.0 46.9,127.2 54.0,135.0"/><polygon points="104.0,135.0 111.2,127.2 115.5,123.0 117.5,122.0 120.5,122.0 122.5,123.0 126.8,127.2 134.0,135.0"/><polygon points="216.0,135.0 223.2,127.2 227.6,123.0 229.5,122.0 232.5,122.0 234.4,123.0 238.8,127.2 246.0,135.0"/><polygon points="49.0,135.0 51.8,132.0 53.8,130.4 54.5,130.0 57.5,130.0 58.2,130.4 60.2,132.0 63.0,135.0"/><polygon points="130.0,135.0 132.8,132.0 134.8,130.4 135.5,130.0 138.5,130.0 139.2,130.4 141.2,132.0 144.0,135.0"/><polygon points="240.0,135.0 242.8,132.0 244.8,130.4 245.5,130.0 248.5,130.0 249.2,130.4 251.2,132.0 254.0,135.0"/></g></g><rect x="0" y="133" width="500" height="10" fill="#b1eac2"/><ellipse cx="-12.5" cy="134.5" rx="8.5" ry="3.6" fill="#b1eac2"/><ellipse cx="4.0" cy="134.5" rx="8.5" ry="3.6" fill="#b1eac2"/><ellipse cx="20.5" cy="134.5" rx="8.5" ry="3.6" fill="#b1eac2"/><ellipse cx="37.0" cy="134.5" rx="8.5" ry="3.6" fill="#b1eac2"/><ellipse cx="53.5" cy="134.5" rx="8.5" ry="3.6" fill="#b1eac2"/><ellipse cx="70.0" cy="134.5" rx="8.5" ry="3.6" fill="#b1eac2"/><ellipse cx="86.5" cy="134.5" rx="8.5" ry="3.6" fill="#b1eac2"/><ellipse cx="103.0" cy="134.5" rx="8.5" ry="3.6" fill="#b1eac2"/><ellipse cx="119.5" cy="134.5" rx="8.5" ry="3.6" fill="#b1eac2"/><ellipse cx="136.0" cy="134.5" rx="8.5" ry="3.6" fill="#b1eac2"/><ellipse cx="152.5" cy="134.5" rx="8.5" ry="3.6" fill="#b1eac2"/><ellipse cx="169.0" cy="134.5" rx="8.5" ry="3.6" fill="#b1eac2"/><ellipse cx="185.5" cy="134.5" rx="8.5" ry="3.6" fill="#b1eac2"/><ellipse cx="202.0" cy="134.5" rx="8.5" ry="3.6" fill="#b1eac2"/><ellipse cx="218.5" cy="134.5" rx="8.5" ry="3.6" fill="#b1eac2"/><ellipse cx="235.0" cy="134.5" rx="8.5" ry="3.6" fill="#b1eac2"/><ellipse cx="251.5" cy="134.5" rx="8.5" ry="3.6" fill="#b1eac2"/><ellipse cx="268.0" cy="134.5" rx="8.5" ry="3.6" fill="#b1eac2"/><ellipse cx="284.5" cy="134.5" rx="8.5" ry="3.6" fill="#b1eac2"/><ellipse cx="301.0" cy="134.5" rx="8.5" ry="3.6" fill="#b1eac2"/><ellipse cx="317.5" cy="134.5" rx="8.5" ry="3.6" fill="#b1eac2"/><ellipse cx="334.0" cy="134.5" rx="8.5" ry="3.6" fill="#b1eac2"/><ellipse cx="350.5" cy="134.5" rx="8.5" ry="3.6" fill="#b1eac2"/><ellipse cx="367.0" cy="134.5" rx="8.5" ry="3.6" fill="#b1eac2"/><ellipse cx="383.5" cy="134.5" rx="8.5" ry="3.6" fill="#b1eac2"/><ellipse cx="400.0" cy="134.5" rx="8.5" ry="3.6" fill="#b1eac2"/><ellipse cx="416.5" cy="134.5" rx="8.5" ry="3.6" fill="#b1eac2"/><ellipse cx="433.0" cy="134.5" rx="8.5" ry="3.6" fill="#b1eac2"/><ellipse cx="449.5" cy="134.5" rx="8.5" ry="3.6" fill="#b1eac2"/><ellipse cx="466.0" cy="134.5" rx="8.5" ry="3.6" fill="#b1eac2"/><ellipse cx="482.5" cy="134.5" rx="8.5" ry="3.6" fill="#b1eac2"/><ellipse cx="499.0" cy="134.5" rx="8.5" ry="3.6" fill="#b1eac2"/><ellipse cx="515.5" cy="134.5" rx="8.5" ry="3.6" fill="#b1eac2"/><rect x="0" y="138" width="500" height="6" fill="#9fdfba"/><ellipse cx="-4.5" cy="138.5" rx="7" ry="2.5" fill="#9fdfba"/><path d="M-13.5 136.5h3M-8.5 134.5v1.5M-2.5 139l3-1.5" stroke="#6fcfae" stroke-width="0.9"/><ellipse cx="12.0" cy="138.5" rx="7" ry="2.5" fill="#9fdfba"/><path d="M3.0 136.5h3M8.0 134.5v1.5M14.0 139l3-1.5" stroke="#6fcfae" stroke-width="0.9"/><ellipse cx="28.5" cy="138.5" rx="7" ry="2.5" fill="#9fdfba"/><path d="M19.5 136.5h3M24.5 134.5v1.5M30.5 139l3-1.5" stroke="#6fcfae" stroke-width="0.9"/><ellipse cx="45.0" cy="138.5" rx="7" ry="2.5" fill="#9fdfba"/><path d="M36.0 136.5h3M41.0 134.5v1.5M47.0 139l3-1.5" stroke="#6fcfae" stroke-width="0.9"/><ellipse cx="61.5" cy="138.5" rx="7" ry="2.5" fill="#9fdfba"/><path d="M52.5 136.5h3M57.5 134.5v1.5M63.5 139l3-1.5" stroke="#6fcfae" stroke-width="0.9"/><ellipse cx="78.0" cy="138.5" rx="7" ry="2.5" fill="#9fdfba"/><path d="M69.0 136.5h3M74.0 134.5v1.5M80.0 139l3-1.5" stroke="#6fcfae" stroke-width="0.9"/><ellipse cx="94.5" cy="138.5" rx="7" ry="2.5" fill="#9fdfba"/><path d="M85.5 136.5h3M90.5 134.5v1.5M96.5 139l3-1.5" stroke="#6fcfae" stroke-width="0.9"/><ellipse cx="111.0" cy="138.5" rx="7" ry="2.5" fill="#9fdfba"/><path d="M102.0 136.5h3M107.0 134.5v1.5M113.0 139l3-1.5" stroke="#6fcfae" stroke-width="0.9"/><ellipse cx="127.5" cy="138.5" rx="7" ry="2.5" fill="#9fdfba"/><path d="M118.5 136.5h3M123.5 134.5v1.5M129.5 139l3-1.5" stroke="#6fcfae" stroke-width="0.9"/><ellipse cx="144.0" cy="138.5" rx="7" ry="2.5" fill="#9fdfba"/><path d="M135.0 136.5h3M140.0 134.5v1.5M146.0 139l3-1.5" stroke="#6fcfae" stroke-width="0.9"/><ellipse cx="160.5" cy="138.5" rx="7" ry="2.5" fill="#9fdfba"/><path d="M151.5 136.5h3M156.5 134.5v1.5M162.5 139l3-1.5" stroke="#6fcfae" stroke-width="0.9"/><ellipse cx="177.0" cy="138.5" rx="7" ry="2.5" fill="#9fdfba"/><path d="M168.0 136.5h3M173.0 134.5v1.5M179.0 139l3-1.5" stroke="#6fcfae" stroke-width="0.9"/><ellipse cx="193.5" cy="138.5" rx="7" ry="2.5" fill="#9fdfba"/><path d="M184.5 136.5h3M189.5 134.5v1.5M195.5 139l3-1.5" stroke="#6fcfae" stroke-width="0.9"/><ellipse cx="210.0" cy="138.5" rx="7" ry="2.5" fill="#9fdfba"/><path d="M201.0 136.5h3M206.0 134.5v1.5M212.0 139l3-1.5" stroke="#6fcfae" stroke-width="0.9"/><ellipse cx="226.5" cy="138.5" rx="7" ry="2.5" fill="#9fdfba"/><path d="M217.5 136.5h3M222.5 134.5v1.5M228.5 139l3-1.5" stroke="#6fcfae" stroke-width="0.9"/><ellipse cx="243.0" cy="138.5" rx="7" ry="2.5" fill="#9fdfba"/><path d="M234.0 136.5h3M239.0 134.5v1.5M245.0 139l3-1.5" stroke="#6fcfae" stroke-width="0.9"/><ellipse cx="259.5" cy="138.5" rx="7" ry="2.5" fill="#9fdfba"/><path d="M250.5 136.5h3M255.5 134.5v1.5M261.5 139l3-1.5" stroke="#6fcfae" stroke-width="0.9"/><ellipse cx="276.0" cy="138.5" rx="7" ry="2.5" fill="#9fdfba"/><path d="M267.0 136.5h3M272.0 134.5v1.5M278.0 139l3-1.5" stroke="#6fcfae" stroke-width="0.9"/><ellipse cx="292.5" cy="138.5" rx="7" ry="2.5" fill="#9fdfba"/><path d="M283.5 136.5h3M288.5 134.5v1.5M294.5 139l3-1.5" stroke="#6fcfae" stroke-width="0.9"/><ellipse cx="309.0" cy="138.5" rx="7" ry="2.5" fill="#9fdfba"/><path d="M300.0 136.5h3M305.0 134.5v1.5M311.0 139l3-1.5" stroke="#6fcfae" stroke-width="0.9"/><ellipse cx="325.5" cy="138.5" rx="7" ry="2.5" fill="#9fdfba"/><path d="M316.5 136.5h3M321.5 134.5v1.5M327.5 139l3-1.5" stroke="#6fcfae" stroke-width="0.9"/><ellipse cx="342.0" cy="138.5" rx="7" ry="2.5" fill="#9fdfba"/><path d="M333.0 136.5h3M338.0 134.5v1.5M344.0 139l3-1.5" stroke="#6fcfae" stroke-width="0.9"/><ellipse cx="358.5" cy="138.5" rx="7" ry="2.5" fill="#9fdfba"/><path d="M349.5 136.5h3M354.5 134.5v1.5M360.5 139l3-1.5" stroke="#6fcfae" stroke-width="0.9"/><ellipse cx="375.0" cy="138.5" rx="7" ry="2.5" fill="#9fdfba"/><path d="M366.0 136.5h3M371.0 134.5v1.5M377.0 139l3-1.5" stroke="#6fcfae" stroke-width="0.9"/><ellipse cx="391.5" cy="138.5" rx="7" ry="2.5" fill="#9fdfba"/><path d="M382.5 136.5h3M387.5 134.5v1.5M393.5 139l3-1.5" stroke="#6fcfae" stroke-width="0.9"/><ellipse cx="408.0" cy="138.5" rx="7" ry="2.5" fill="#9fdfba"/><path d="M399.0 136.5h3M404.0 134.5v1.5M410.0 139l3-1.5" stroke="#6fcfae" stroke-width="0.9"/><ellipse cx="424.5" cy="138.5" rx="7" ry="2.5" fill="#9fdfba"/><path d="M415.5 136.5h3M420.5 134.5v1.5M426.5 139l3-1.5" stroke="#6fcfae" stroke-width="0.9"/><ellipse cx="441.0" cy="138.5" rx="7" ry="2.5" fill="#9fdfba"/><path d="M432.0 136.5h3M437.0 134.5v1.5M443.0 139l3-1.5" stroke="#6fcfae" stroke-width="0.9"/><ellipse cx="457.5" cy="138.5" rx="7" ry="2.5" fill="#9fdfba"/><path d="M448.5 136.5h3M453.5 134.5v1.5M459.5 139l3-1.5" stroke="#6fcfae" stroke-width="0.9"/><ellipse cx="474.0" cy="138.5" rx="7" ry="2.5" fill="#9fdfba"/><path d="M465.0 136.5h3M470.0 134.5v1.5M476.0 139l3-1.5" stroke="#6fcfae" stroke-width="0.9"/><ellipse cx="490.5" cy="138.5" rx="7" ry="2.5" fill="#9fdfba"/><path d="M481.5 136.5h3M486.5 134.5v1.5M492.5 139l3-1.5" stroke="#6fcfae" stroke-width="0.9"/><ellipse cx="507.0" cy="138.5" rx="7" ry="2.5" fill="#9fdfba"/><path d="M498.0 136.5h3M503.0 134.5v1.5M509.0 139l3-1.5" stroke="#6fcfae" stroke-width="0.9"/><ellipse cx="523.5" cy="138.5" rx="7" ry="2.5" fill="#9fdfba"/><path d="M514.5 136.5h3M519.5 134.5v1.5M525.5 139l3-1.5" stroke="#6fcfae" stroke-width="0.9"/><rect x="0" y="143" width="500" height="9" fill="#6bcbad"/><ellipse cx="-12.5" cy="143" rx="6.5" ry="1.8" fill="#9fdfba"/><path d="M-7.5 147l2.5-1.5" stroke="#52ae92" stroke-width="0.9"/><ellipse cx="4.0" cy="143" rx="6.5" ry="1.8" fill="#9fdfba"/><path d="M9.0 147l2.5-1.5" stroke="#52ae92" stroke-width="0.9"/><ellipse cx="20.5" cy="143" rx="6.5" ry="1.8" fill="#9fdfba"/><path d="M25.5 147l2.5-1.5" stroke="#52ae92" stroke-width="0.9"/><ellipse cx="37.0" cy="143" rx="6.5" ry="1.8" fill="#9fdfba"/><path d="M42.0 147l2.5-1.5" stroke="#52ae92" stroke-width="0.9"/><ellipse cx="53.5" cy="143" rx="6.5" ry="1.8" fill="#9fdfba"/><path d="M58.5 147l2.5-1.5" stroke="#52ae92" stroke-width="0.9"/><ellipse cx="70.0" cy="143" rx="6.5" ry="1.8" fill="#9fdfba"/><path d="M75.0 147l2.5-1.5" stroke="#52ae92" stroke-width="0.9"/><ellipse cx="86.5" cy="143" rx="6.5" ry="1.8" fill="#9fdfba"/><path d="M91.5 147l2.5-1.5" stroke="#52ae92" stroke-width="0.9"/><ellipse cx="103.0" cy="143" rx="6.5" ry="1.8" fill="#9fdfba"/><path d="M108.0 147l2.5-1.5" stroke="#52ae92" stroke-width="0.9"/><ellipse cx="119.5" cy="143" rx="6.5" ry="1.8" fill="#9fdfba"/><path d="M124.5 147l2.5-1.5" stroke="#52ae92" stroke-width="0.9"/><ellipse cx="136.0" cy="143" rx="6.5" ry="1.8" fill="#9fdfba"/><path d="M141.0 147l2.5-1.5" stroke="#52ae92" stroke-width="0.9"/><ellipse cx="152.5" cy="143" rx="6.5" ry="1.8" fill="#9fdfba"/><path d="M157.5 147l2.5-1.5" stroke="#52ae92" stroke-width="0.9"/><ellipse cx="169.0" cy="143" rx="6.5" ry="1.8" fill="#9fdfba"/><path d="M174.0 147l2.5-1.5" stroke="#52ae92" stroke-width="0.9"/><ellipse cx="185.5" cy="143" rx="6.5" ry="1.8" fill="#9fdfba"/><path d="M190.5 147l2.5-1.5" stroke="#52ae92" stroke-width="0.9"/><ellipse cx="202.0" cy="143" rx="6.5" ry="1.8" fill="#9fdfba"/><path d="M207.0 147l2.5-1.5" stroke="#52ae92" stroke-width="0.9"/><ellipse cx="218.5" cy="143" rx="6.5" ry="1.8" fill="#9fdfba"/><path d="M223.5 147l2.5-1.5" stroke="#52ae92" stroke-width="0.9"/><ellipse cx="235.0" cy="143" rx="6.5" ry="1.8" fill="#9fdfba"/><path d="M240.0 147l2.5-1.5" stroke="#52ae92" stroke-width="0.9"/><ellipse cx="251.5" cy="143" rx="6.5" ry="1.8" fill="#9fdfba"/><path d="M256.5 147l2.5-1.5" stroke="#52ae92" stroke-width="0.9"/><ellipse cx="268.0" cy="143" rx="6.5" ry="1.8" fill="#9fdfba"/><path d="M273.0 147l2.5-1.5" stroke="#52ae92" stroke-width="0.9"/><ellipse cx="284.5" cy="143" rx="6.5" ry="1.8" fill="#9fdfba"/><path d="M289.5 147l2.5-1.5" stroke="#52ae92" stroke-width="0.9"/><ellipse cx="301.0" cy="143" rx="6.5" ry="1.8" fill="#9fdfba"/><path d="M306.0 147l2.5-1.5" stroke="#52ae92" stroke-width="0.9"/><ellipse cx="317.5" cy="143" rx="6.5" ry="1.8" fill="#9fdfba"/><path d="M322.5 147l2.5-1.5" stroke="#52ae92" stroke-width="0.9"/><ellipse cx="334.0" cy="143" rx="6.5" ry="1.8" fill="#9fdfba"/><path d="M339.0 147l2.5-1.5" stroke="#52ae92" stroke-width="0.9"/><ellipse cx="350.5" cy="143" rx="6.5" ry="1.8" fill="#9fdfba"/><path d="M355.5 147l2.5-1.5" stroke="#52ae92" stroke-width="0.9"/><ellipse cx="367.0" cy="143" rx="6.5" ry="1.8" fill="#9fdfba"/><path d="M372.0 147l2.5-1.5" stroke="#52ae92" stroke-width="0.9"/><ellipse cx="383.5" cy="143" rx="6.5" ry="1.8" fill="#9fdfba"/><path d="M388.5 147l2.5-1.5" stroke="#52ae92" stroke-width="0.9"/><ellipse cx="400.0" cy="143" rx="6.5" ry="1.8" fill="#9fdfba"/><path d="M405.0 147l2.5-1.5" stroke="#52ae92" stroke-width="0.9"/><ellipse cx="416.5" cy="143" rx="6.5" ry="1.8" fill="#9fdfba"/><path d="M421.5 147l2.5-1.5" stroke="#52ae92" stroke-width="0.9"/><ellipse cx="433.0" cy="143" rx="6.5" ry="1.8" fill="#9fdfba"/><path d="M438.0 147l2.5-1.5" stroke="#52ae92" stroke-width="0.9"/><ellipse cx="449.5" cy="143" rx="6.5" ry="1.8" fill="#9fdfba"/><path d="M454.5 147l2.5-1.5" stroke="#52ae92" stroke-width="0.9"/><ellipse cx="466.0" cy="143" rx="6.5" ry="1.8" fill="#9fdfba"/><path d="M471.0 147l2.5-1.5" stroke="#52ae92" stroke-width="0.9"/><ellipse cx="482.5" cy="143" rx="6.5" ry="1.8" fill="#9fdfba"/><path d="M487.5 147l2.5-1.5" stroke="#52ae92" stroke-width="0.9"/><ellipse cx="499.0" cy="143" rx="6.5" ry="1.8" fill="#9fdfba"/><path d="M504.0 147l2.5-1.5" stroke="#52ae92" stroke-width="0.9"/><ellipse cx="515.5" cy="143" rx="6.5" ry="1.8" fill="#9fdfba"/><path d="M520.5 147l2.5-1.5" stroke="#52ae92" stroke-width="0.9"/><rect x="0" y="152" width="500" height="15" fill="#214c3e"/><rect x="3.0" y="151.5" width="4" height="1.5" fill="#3f8f78"/><rect x="18.0" y="151.5" width="4" height="1.5" fill="#3f8f78"/><rect x="33.0" y="151.5" width="4" height="1.5" fill="#3f8f78"/><rect x="48.0" y="151.5" width="4" height="1.5" fill="#3f8f78"/><rect x="63.0" y="151.5" width="4" height="1.5" fill="#3f8f78"/><rect x="78.0" y="151.5" width="4" height="1.5" fill="#3f8f78"/><rect x="93.0" y="151.5" width="4" height="1.5" fill="#3f8f78"/><rect x="108.0" y="151.5" width="4" height="1.5" fill="#3f8f78"/><rect x="123.0" y="151.5" width="4" height="1.5" fill="#3f8f78"/><rect x="138.0" y="151.5" width="4" height="1.5" fill="#3f8f78"/><rect x="153.0" y="151.5" width="4" height="1.5" fill="#3f8f78"/><rect x="168.0" y="151.5" width="4" height="1.5" fill="#3f8f78"/><rect x="183.0" y="151.5" width="4" height="1.5" fill="#3f8f78"/><rect x="198.0" y="151.5" width="4" height="1.5" fill="#3f8f78"/><rect x="213.0" y="151.5" width="4" height="1.5" fill="#3f8f78"/><rect x="228.0" y="151.5" width="4" height="1.5" fill="#3f8f78"/><rect x="243.0" y="151.5" width="4" height="1.5" fill="#3f8f78"/><rect x="258.0" y="151.5" width="4" height="1.5" fill="#3f8f78"/><rect x="273.0" y="151.5" width="4" height="1.5" fill="#3f8f78"/><rect x="288.0" y="151.5" width="4" height="1.5" fill="#3f8f78"/><rect x="303.0" y="151.5" width="4" height="1.5" fill="#3f8f78"/><rect x="318.0" y="151.5" width="4" height="1.5" fill="#3f8f78"/><rect x="333.0" y="151.5" width="4" height="1.5" fill="#3f8f78"/><rect x="348.0" y="151.5" width="4" height="1.5" fill="#3f8f78"/><rect x="363.0" y="151.5" width="4" height="1.5" fill="#3f8f78"/><rect x="378.0" y="151.5" width="4" height="1.5" fill="#3f8f78"/><rect x="393.0" y="151.5" width="4" height="1.5" fill="#3f8f78"/><rect x="408.0" y="151.5" width="4" height="1.5" fill="#3f8f78"/><rect x="423.0" y="151.5" width="4" height="1.5" fill="#3f8f78"/><rect x="438.0" y="151.5" width="4" height="1.5" fill="#3f8f78"/><rect x="453.0" y="151.5" width="4" height="1.5" fill="#3f8f78"/><rect x="468.0" y="151.5" width="4" height="1.5" fill="#3f8f78"/><rect x="483.0" y="151.5" width="4" height="1.5" fill="#3f8f78"/><rect x="498.0" y="151.5" width="4" height="1.5" fill="#3f8f78"/><g transform="translate(0 0)"><ellipse cx="23" cy="159" rx="7.5" ry="4.5" fill="#3b7b8a"/><rect x="21" y="163" width="5" height="1.5" fill="#3b7b8a"/><ellipse cx="39" cy="159" rx="7.5" ry="4.5" fill="#3b7b8a"/><rect x="37" y="163" width="5" height="1.5" fill="#3b7b8a"/><ellipse cx="131" cy="159" rx="7.5" ry="4.5" fill="#3b7b8a"/><rect x="129" y="163" width="5" height="1.5" fill="#3b7b8a"/><ellipse cx="147" cy="159" rx="7.5" ry="4.5" fill="#3b7b8a"/><rect x="145" y="163" width="5" height="1.5" fill="#3b7b8a"/><ellipse cx="230" cy="159" rx="7.5" ry="4.5" fill="#3b7b8a"/><rect x="228" y="163" width="5" height="1.5" fill="#3b7b8a"/><path d="M17 152l6 6h-3l4 4h-14l4-4h-3z" fill="#3d8f7e"/><path d="M46 152l6 6h-3l4 4h-14l4-4h-3z" fill="#3d8f7e"/><path d="M95 152l6 6h-3l4 4h-14l4-4h-3z" fill="#3d8f7e"/><path d="M115 152l6 6h-3l4 4h-14l4-4h-3z" fill="#3d8f7e"/><path d="M158 152l6 6h-3l4 4h-14l4-4h-3z" fill="#3d8f7e"/><path d="M214 152l6 6h-3l4 4h-14l4-4h-3z" fill="#3d8f7e"/><path d="M237 152l6 6h-3l4 4h-14l4-4h-3z" fill="#3d8f7e"/><rect x="6.2" y="161.0" width="3.5" height="3.5" fill="#a87448"/><ellipse cx="8.0" cy="156.5" rx="6.3" ry="5" fill="#5cbd62" stroke="#2e7d62" stroke-width="0.8"/><path d="M2.5 159.5h11" stroke="#3f9a72" stroke-width="1.3"/><ellipse cx="8.0" cy="153.9" rx="4" ry="1.8" fill="#a9e27a"/><rect x="53.2" y="161.0" width="3.5" height="3.5" fill="#a87448"/><ellipse cx="55.0" cy="156.5" rx="6.3" ry="5" fill="#5cbd62" stroke="#2e7d62" stroke-width="0.8"/><path d="M49.5 159.5h11" stroke="#3f9a72" stroke-width="1.3"/><ellipse cx="55.0" cy="153.9" rx="4" ry="1.8" fill="#a9e27a"/><rect x="69.2" y="161.0" width="3.5" height="3.5" fill="#a87448"/><ellipse cx="71.0" cy="156.5" rx="6.3" ry="5" fill="#5cbd62" stroke="#2e7d62" stroke-width="0.8"/><path d="M65.5 159.5h11" stroke="#3f9a72" stroke-width="1.3"/><ellipse cx="71.0" cy="153.9" rx="4" ry="1.8" fill="#a9e27a"/><rect x="85.2" y="161.0" width="3.5" height="3.5" fill="#a87448"/><ellipse cx="87.0" cy="156.5" rx="6.3" ry="5" fill="#5cbd62" stroke="#2e7d62" stroke-width="0.8"/><path d="M81.5 159.5h11" stroke="#3f9a72" stroke-width="1.3"/><ellipse cx="87.0" cy="153.9" rx="4" ry="1.8" fill="#a9e27a"/><rect x="102.2" y="161.0" width="3.5" height="3.5" fill="#a87448"/><ellipse cx="104.0" cy="156.5" rx="6.3" ry="5" fill="#5cbd62" stroke="#2e7d62" stroke-width="0.8"/><path d="M98.5 159.5h11" stroke="#3f9a72" stroke-width="1.3"/><ellipse cx="104.0" cy="153.9" rx="4" ry="1.8" fill="#a9e27a"/><rect x="166.2" y="161.0" width="3.5" height="3.5" fill="#a87448"/><ellipse cx="168.0" cy="156.5" rx="6.3" ry="5" fill="#5cbd62" stroke="#2e7d62" stroke-width="0.8"/><path d="M162.5 159.5h11" stroke="#3f9a72" stroke-width="1.3"/><ellipse cx="168.0" cy="153.9" rx="4" ry="1.8" fill="#a9e27a"/><rect x="182.2" y="161.0" width="3.5" height="3.5" fill="#a87448"/><ellipse cx="184.0" cy="156.5" rx="6.3" ry="5" fill="#5cbd62" stroke="#2e7d62" stroke-width="0.8"/><path d="M178.5 159.5h11" stroke="#3f9a72" stroke-width="1.3"/><ellipse cx="184.0" cy="153.9" rx="4" ry="1.8" fill="#a9e27a"/><rect x="198.2" y="161.0" width="3.5" height="3.5" fill="#a87448"/><ellipse cx="200.0" cy="156.5" rx="6.3" ry="5" fill="#5cbd62" stroke="#2e7d62" stroke-width="0.8"/><path d="M194.5 159.5h11" stroke="#3f9a72" stroke-width="1.3"/><ellipse cx="200.0" cy="153.9" rx="4" ry="1.8" fill="#a9e27a"/><rect x="244.2" y="161.0" width="3.5" height="3.5" fill="#a87448"/><ellipse cx="246.0" cy="156.5" rx="6.3" ry="5" fill="#5cbd62" stroke="#2e7d62" stroke-width="0.8"/><path d="M240.5 159.5h11" stroke="#3f9a72" stroke-width="1.3"/><ellipse cx="246.0" cy="153.9" rx="4" ry="1.8" fill="#a9e27a"/></g><g transform="translate(250 0)"><ellipse cx="23" cy="159" rx="7.5" ry="4.5" fill="#3b7b8a"/><rect x="21" y="163" width="5" height="1.5" fill="#3b7b8a"/><ellipse cx="39" cy="159" rx="7.5" ry="4.5" fill="#3b7b8a"/><rect x="37" y="163" width="5" height="1.5" fill="#3b7b8a"/><ellipse cx="131" cy="159" rx="7.5" ry="4.5" fill="#3b7b8a"/><rect x="129" y="163" width="5" height="1.5" fill="#3b7b8a"/><ellipse cx="147" cy="159" rx="7.5" ry="4.5" fill="#3b7b8a"/><rect x="145" y="163" width="5" height="1.5" fill="#3b7b8a"/><ellipse cx="230" cy="159" rx="7.5" ry="4.5" fill="#3b7b8a"/><rect x="228" y="163" width="5" height="1.5" fill="#3b7b8a"/><path d="M17 152l6 6h-3l4 4h-14l4-4h-3z" fill="#3d8f7e"/><path d="M46 152l6 6h-3l4 4h-14l4-4h-3z" fill="#3d8f7e"/><path d="M95 152l6 6h-3l4 4h-14l4-4h-3z" fill="#3d8f7e"/><path d="M115 152l6 6h-3l4 4h-14l4-4h-3z" fill="#3d8f7e"/><path d="M158 152l6 6h-3l4 4h-14l4-4h-3z" fill="#3d8f7e"/><path d="M214 152l6 6h-3l4 4h-14l4-4h-3z" fill="#3d8f7e"/><path d="M237 152l6 6h-3l4 4h-14l4-4h-3z" fill="#3d8f7e"/><rect x="6.2" y="161.0" width="3.5" height="3.5" fill="#a87448"/><ellipse cx="8.0" cy="156.5" rx="6.3" ry="5" fill="#5cbd62" stroke="#2e7d62" stroke-width="0.8"/><path d="M2.5 159.5h11" stroke="#3f9a72" stroke-width="1.3"/><ellipse cx="8.0" cy="153.9" rx="4" ry="1.8" fill="#a9e27a"/><rect x="53.2" y="161.0" width="3.5" height="3.5" fill="#a87448"/><ellipse cx="55.0" cy="156.5" rx="6.3" ry="5" fill="#5cbd62" stroke="#2e7d62" stroke-width="0.8"/><path d="M49.5 159.5h11" stroke="#3f9a72" stroke-width="1.3"/><ellipse cx="55.0" cy="153.9" rx="4" ry="1.8" fill="#a9e27a"/><rect x="69.2" y="161.0" width="3.5" height="3.5" fill="#a87448"/><ellipse cx="71.0" cy="156.5" rx="6.3" ry="5" fill="#5cbd62" stroke="#2e7d62" stroke-width="0.8"/><path d="M65.5 159.5h11" stroke="#3f9a72" stroke-width="1.3"/><ellipse cx="71.0" cy="153.9" rx="4" ry="1.8" fill="#a9e27a"/><rect x="85.2" y="161.0" width="3.5" height="3.5" fill="#a87448"/><ellipse cx="87.0" cy="156.5" rx="6.3" ry="5" fill="#5cbd62" stroke="#2e7d62" stroke-width="0.8"/><path d="M81.5 159.5h11" stroke="#3f9a72" stroke-width="1.3"/><ellipse cx="87.0" cy="153.9" rx="4" ry="1.8" fill="#a9e27a"/><rect x="102.2" y="161.0" width="3.5" height="3.5" fill="#a87448"/><ellipse cx="104.0" cy="156.5" rx="6.3" ry="5" fill="#5cbd62" stroke="#2e7d62" stroke-width="0.8"/><path d="M98.5 159.5h11" stroke="#3f9a72" stroke-width="1.3"/><ellipse cx="104.0" cy="153.9" rx="4" ry="1.8" fill="#a9e27a"/><rect x="166.2" y="161.0" width="3.5" height="3.5" fill="#a87448"/><ellipse cx="168.0" cy="156.5" rx="6.3" ry="5" fill="#5cbd62" stroke="#2e7d62" stroke-width="0.8"/><path d="M162.5 159.5h11" stroke="#3f9a72" stroke-width="1.3"/><ellipse cx="168.0" cy="153.9" rx="4" ry="1.8" fill="#a9e27a"/><rect x="182.2" y="161.0" width="3.5" height="3.5" fill="#a87448"/><ellipse cx="184.0" cy="156.5" rx="6.3" ry="5" fill="#5cbd62" stroke="#2e7d62" stroke-width="0.8"/><path d="M178.5 159.5h11" stroke="#3f9a72" stroke-width="1.3"/><ellipse cx="184.0" cy="153.9" rx="4" ry="1.8" fill="#a9e27a"/><rect x="198.2" y="161.0" width="3.5" height="3.5" fill="#a87448"/><ellipse cx="200.0" cy="156.5" rx="6.3" ry="5" fill="#5cbd62" stroke="#2e7d62" stroke-width="0.8"/><path d="M194.5 159.5h11" stroke="#3f9a72" stroke-width="1.3"/><ellipse cx="200.0" cy="153.9" rx="4" ry="1.8" fill="#a9e27a"/><rect x="244.2" y="161.0" width="3.5" height="3.5" fill="#a87448"/><ellipse cx="246.0" cy="156.5" rx="6.3" ry="5" fill="#5cbd62" stroke="#2e7d62" stroke-width="0.8"/><path d="M240.5 159.5h11" stroke="#3f9a72" stroke-width="1.3"/><ellipse cx="246.0" cy="153.9" rx="4" ry="1.8" fill="#a9e27a"/></g><rect x="0" y="166" width="500" height="25" fill="#5cc45e"/><path d="M-10.0 171 l1.5 1.8 1.5-1.8" fill="none" stroke="#42a463" stroke-width="0.9"/><path d="M6.0 171 l1.5 1.8 1.5-1.8" fill="none" stroke="#42a463" stroke-width="0.9"/><path d="M22.0 171 l1.5 1.8 1.5-1.8" fill="none" stroke="#42a463" stroke-width="0.9"/><path d="M38.0 171 l1.5 1.8 1.5-1.8" fill="none" stroke="#42a463" stroke-width="0.9"/><path d="M54.0 171 l1.5 1.8 1.5-1.8" fill="none" stroke="#42a463" stroke-width="0.9"/><path d="M70.0 171 l1.5 1.8 1.5-1.8" fill="none" stroke="#42a463" stroke-width="0.9"/><path d="M86.0 171 l1.5 1.8 1.5-1.8" fill="none" stroke="#42a463" stroke-width="0.9"/><path d="M102.0 171 l1.5 1.8 1.5-1.8" fill="none" stroke="#42a463" stroke-width="0.9"/><path d="M118.0 171 l1.5 1.8 1.5-1.8" fill="none" stroke="#42a463" stroke-width="0.9"/><path d="M134.0 171 l1.5 1.8 1.5-1.8" fill="none" stroke="#42a463" stroke-width="0.9"/><path d="M150.0 171 l1.5 1.8 1.5-1.8" fill="none" stroke="#42a463" stroke-width="0.9"/><path d="M166.0 171 l1.5 1.8 1.5-1.8" fill="none" stroke="#42a463" stroke-width="0.9"/><path d="M182.0 171 l1.5 1.8 1.5-1.8" fill="none" stroke="#42a463" stroke-width="0.9"/><path d="M198.0 171 l1.5 1.8 1.5-1.8" fill="none" stroke="#42a463" stroke-width="0.9"/><path d="M214.0 171 l1.5 1.8 1.5-1.8" fill="none" stroke="#42a463" stroke-width="0.9"/><path d="M230.0 171 l1.5 1.8 1.5-1.8" fill="none" stroke="#42a463" stroke-width="0.9"/><path d="M246.0 171 l1.5 1.8 1.5-1.8" fill="none" stroke="#42a463" stroke-width="0.9"/><path d="M262.0 171 l1.5 1.8 1.5-1.8" fill="none" stroke="#42a463" stroke-width="0.9"/><path d="M278.0 171 l1.5 1.8 1.5-1.8" fill="none" stroke="#42a463" stroke-width="0.9"/><path d="M294.0 171 l1.5 1.8 1.5-1.8" fill="none" stroke="#42a463" stroke-width="0.9"/><path d="M310.0 171 l1.5 1.8 1.5-1.8" fill="none" stroke="#42a463" stroke-width="0.9"/><path d="M326.0 171 l1.5 1.8 1.5-1.8" fill="none" stroke="#42a463" stroke-width="0.9"/><path d="M342.0 171 l1.5 1.8 1.5-1.8" fill="none" stroke="#42a463" stroke-width="0.9"/><path d="M358.0 171 l1.5 1.8 1.5-1.8" fill="none" stroke="#42a463" stroke-width="0.9"/><path d="M374.0 171 l1.5 1.8 1.5-1.8" fill="none" stroke="#42a463" stroke-width="0.9"/><path d="M390.0 171 l1.5 1.8 1.5-1.8" fill="none" stroke="#42a463" stroke-width="0.9"/><path d="M406.0 171 l1.5 1.8 1.5-1.8" fill="none" stroke="#42a463" stroke-width="0.9"/><path d="M422.0 171 l1.5 1.8 1.5-1.8" fill="none" stroke="#42a463" stroke-width="0.9"/><path d="M438.0 171 l1.5 1.8 1.5-1.8" fill="none" stroke="#42a463" stroke-width="0.9"/><path d="M454.0 171 l1.5 1.8 1.5-1.8" fill="none" stroke="#42a463" stroke-width="0.9"/><path d="M470.0 171 l1.5 1.8 1.5-1.8" fill="none" stroke="#42a463" stroke-width="0.9"/><path d="M486.0 171 l1.5 1.8 1.5-1.8" fill="none" stroke="#42a463" stroke-width="0.9"/><path d="M502.0 171 l1.5 1.8 1.5-1.8" fill="none" stroke="#42a463" stroke-width="0.9"/><path d="M518.0 171 l1.5 1.8 1.5-1.8" fill="none" stroke="#42a463" stroke-width="0.9"/><path d="M534.0 171 l1.5 1.8 1.5-1.8" fill="none" stroke="#42a463" stroke-width="0.9"/><path d="M-2.0 176 l1.5 1.8 1.5-1.8" fill="none" stroke="#42a463" stroke-width="0.9"/><path d="M14.0 176 l1.5 1.8 1.5-1.8" fill="none" stroke="#42a463" stroke-width="0.9"/><path d="M30.0 176 l1.5 1.8 1.5-1.8" fill="none" stroke="#42a463" stroke-width="0.9"/><path d="M46.0 176 l1.5 1.8 1.5-1.8" fill="none" stroke="#42a463" stroke-width="0.9"/><path d="M62.0 176 l1.5 1.8 1.5-1.8" fill="none" stroke="#42a463" stroke-width="0.9"/><path d="M78.0 176 l1.5 1.8 1.5-1.8" fill="none" stroke="#42a463" stroke-width="0.9"/><path d="M94.0 176 l1.5 1.8 1.5-1.8" fill="none" stroke="#42a463" stroke-width="0.9"/><path d="M110.0 176 l1.5 1.8 1.5-1.8" fill="none" stroke="#42a463" stroke-width="0.9"/><path d="M126.0 176 l1.5 1.8 1.5-1.8" fill="none" stroke="#42a463" stroke-width="0.9"/><path d="M142.0 176 l1.5 1.8 1.5-1.8" fill="none" stroke="#42a463" stroke-width="0.9"/><path d="M158.0 176 l1.5 1.8 1.5-1.8" fill="none" stroke="#42a463" stroke-width="0.9"/><path d="M174.0 176 l1.5 1.8 1.5-1.8" fill="none" stroke="#42a463" stroke-width="0.9"/><path d="M190.0 176 l1.5 1.8 1.5-1.8" fill="none" stroke="#42a463" stroke-width="0.9"/><path d="M206.0 176 l1.5 1.8 1.5-1.8" fill="none" stroke="#42a463" stroke-width="0.9"/><path d="M222.0 176 l1.5 1.8 1.5-1.8" fill="none" stroke="#42a463" stroke-width="0.9"/><path d="M238.0 176 l1.5 1.8 1.5-1.8" fill="none" stroke="#42a463" stroke-width="0.9"/><path d="M254.0 176 l1.5 1.8 1.5-1.8" fill="none" stroke="#42a463" stroke-width="0.9"/><path d="M270.0 176 l1.5 1.8 1.5-1.8" fill="none" stroke="#42a463" stroke-width="0.9"/><path d="M286.0 176 l1.5 1.8 1.5-1.8" fill="none" stroke="#42a463" stroke-width="0.9"/><path d="M302.0 176 l1.5 1.8 1.5-1.8" fill="none" stroke="#42a463" stroke-width="0.9"/><path d="M318.0 176 l1.5 1.8 1.5-1.8" fill="none" stroke="#42a463" stroke-width="0.9"/><path d="M334.0 176 l1.5 1.8 1.5-1.8" fill="none" stroke="#42a463" stroke-width="0.9"/><path d="M350.0 176 l1.5 1.8 1.5-1.8" fill="none" stroke="#42a463" stroke-width="0.9"/><path d="M366.0 176 l1.5 1.8 1.5-1.8" fill="none" stroke="#42a463" stroke-width="0.9"/><path d="M382.0 176 l1.5 1.8 1.5-1.8" fill="none" stroke="#42a463" stroke-width="0.9"/><path d="M398.0 176 l1.5 1.8 1.5-1.8" fill="none" stroke="#42a463" stroke-width="0.9"/><path d="M414.0 176 l1.5 1.8 1.5-1.8" fill="none" stroke="#42a463" stroke-width="0.9"/><path d="M430.0 176 l1.5 1.8 1.5-1.8" fill="none" stroke="#42a463" stroke-width="0.9"/><path d="M446.0 176 l1.5 1.8 1.5-1.8" fill="none" stroke="#42a463" stroke-width="0.9"/><path d="M462.0 176 l1.5 1.8 1.5-1.8" fill="none" stroke="#42a463" stroke-width="0.9"/><path d="M478.0 176 l1.5 1.8 1.5-1.8" fill="none" stroke="#42a463" stroke-width="0.9"/><path d="M494.0 176 l1.5 1.8 1.5-1.8" fill="none" stroke="#42a463" stroke-width="0.9"/><path d="M510.0 176 l1.5 1.8 1.5-1.8" fill="none" stroke="#42a463" stroke-width="0.9"/><path d="M526.0 176 l1.5 1.8 1.5-1.8" fill="none" stroke="#42a463" stroke-width="0.9"/><path d="M542.0 176 l1.5 1.8 1.5-1.8" fill="none" stroke="#42a463" stroke-width="0.9"/><path d="M-10.0 181 l1.5 1.8 1.5-1.8" fill="none" stroke="#42a463" stroke-width="0.9"/><path d="M6.0 181 l1.5 1.8 1.5-1.8" fill="none" stroke="#42a463" stroke-width="0.9"/><path d="M22.0 181 l1.5 1.8 1.5-1.8" fill="none" stroke="#42a463" stroke-width="0.9"/><path d="M38.0 181 l1.5 1.8 1.5-1.8" fill="none" stroke="#42a463" stroke-width="0.9"/><path d="M54.0 181 l1.5 1.8 1.5-1.8" fill="none" stroke="#42a463" stroke-width="0.9"/><path d="M70.0 181 l1.5 1.8 1.5-1.8" fill="none" stroke="#42a463" stroke-width="0.9"/><path d="M86.0 181 l1.5 1.8 1.5-1.8" fill="none" stroke="#42a463" stroke-width="0.9"/><path d="M102.0 181 l1.5 1.8 1.5-1.8" fill="none" stroke="#42a463" stroke-width="0.9"/><path d="M118.0 181 l1.5 1.8 1.5-1.8" fill="none" stroke="#42a463" stroke-width="0.9"/><path d="M134.0 181 l1.5 1.8 1.5-1.8" fill="none" stroke="#42a463" stroke-width="0.9"/><path d="M150.0 181 l1.5 1.8 1.5-1.8" fill="none" stroke="#42a463" stroke-width="0.9"/><path d="M166.0 181 l1.5 1.8 1.5-1.8" fill="none" stroke="#42a463" stroke-width="0.9"/><path d="M182.0 181 l1.5 1.8 1.5-1.8" fill="none" stroke="#42a463" stroke-width="0.9"/><path d="M198.0 181 l1.5 1.8 1.5-1.8" fill="none" stroke="#42a463" stroke-width="0.9"/><path d="M214.0 181 l1.5 1.8 1.5-1.8" fill="none" stroke="#42a463" stroke-width="0.9"/><path d="M230.0 181 l1.5 1.8 1.5-1.8" fill="none" stroke="#42a463" stroke-width="0.9"/><path d="M246.0 181 l1.5 1.8 1.5-1.8" fill="none" stroke="#42a463" stroke-width="0.9"/><path d="M262.0 181 l1.5 1.8 1.5-1.8" fill="none" stroke="#42a463" stroke-width="0.9"/><path d="M278.0 181 l1.5 1.8 1.5-1.8" fill="none" stroke="#42a463" stroke-width="0.9"/><path d="M294.0 181 l1.5 1.8 1.5-1.8" fill="none" stroke="#42a463" stroke-width="0.9"/><path d="M310.0 181 l1.5 1.8 1.5-1.8" fill="none" stroke="#42a463" stroke-width="0.9"/><path d="M326.0 181 l1.5 1.8 1.5-1.8" fill="none" stroke="#42a463" stroke-width="0.9"/><path d="M342.0 181 l1.5 1.8 1.5-1.8" fill="none" stroke="#42a463" stroke-width="0.9"/><path d="M358.0 181 l1.5 1.8 1.5-1.8" fill="none" stroke="#42a463" stroke-width="0.9"/><path d="M374.0 181 l1.5 1.8 1.5-1.8" fill="none" stroke="#42a463" stroke-width="0.9"/><path d="M390.0 181 l1.5 1.8 1.5-1.8" fill="none" stroke="#42a463" stroke-width="0.9"/><path d="M406.0 181 l1.5 1.8 1.5-1.8" fill="none" stroke="#42a463" stroke-width="0.9"/><path d="M422.0 181 l1.5 1.8 1.5-1.8" fill="none" stroke="#42a463" stroke-width="0.9"/><path d="M438.0 181 l1.5 1.8 1.5-1.8" fill="none" stroke="#42a463" stroke-width="0.9"/><path d="M454.0 181 l1.5 1.8 1.5-1.8" fill="none" stroke="#42a463" stroke-width="0.9"/><path d="M470.0 181 l1.5 1.8 1.5-1.8" fill="none" stroke="#42a463" stroke-width="0.9"/><path d="M486.0 181 l1.5 1.8 1.5-1.8" fill="none" stroke="#42a463" stroke-width="0.9"/><path d="M502.0 181 l1.5 1.8 1.5-1.8" fill="none" stroke="#42a463" stroke-width="0.9"/><path d="M518.0 181 l1.5 1.8 1.5-1.8" fill="none" stroke="#42a463" stroke-width="0.9"/><path d="M534.0 181 l1.5 1.8 1.5-1.8" fill="none" stroke="#42a463" stroke-width="0.9"/><path d="M-2.0 186 l1.5 1.8 1.5-1.8" fill="none" stroke="#42a463" stroke-width="0.9"/><path d="M14.0 186 l1.5 1.8 1.5-1.8" fill="none" stroke="#42a463" stroke-width="0.9"/><path d="M30.0 186 l1.5 1.8 1.5-1.8" fill="none" stroke="#42a463" stroke-width="0.9"/><path d="M46.0 186 l1.5 1.8 1.5-1.8" fill="none" stroke="#42a463" stroke-width="0.9"/><path d="M62.0 186 l1.5 1.8 1.5-1.8" fill="none" stroke="#42a463" stroke-width="0.9"/><path d="M78.0 186 l1.5 1.8 1.5-1.8" fill="none" stroke="#42a463" stroke-width="0.9"/><path d="M94.0 186 l1.5 1.8 1.5-1.8" fill="none" stroke="#42a463" stroke-width="0.9"/><path d="M110.0 186 l1.5 1.8 1.5-1.8" fill="none" stroke="#42a463" stroke-width="0.9"/><path d="M126.0 186 l1.5 1.8 1.5-1.8" fill="none" stroke="#42a463" stroke-width="0.9"/><path d="M142.0 186 l1.5 1.8 1.5-1.8" fill="none" stroke="#42a463" stroke-width="0.9"/><path d="M158.0 186 l1.5 1.8 1.5-1.8" fill="none" stroke="#42a463" stroke-width="0.9"/><path d="M174.0 186 l1.5 1.8 1.5-1.8" fill="none" stroke="#42a463" stroke-width="0.9"/><path d="M190.0 186 l1.5 1.8 1.5-1.8" fill="none" stroke="#42a463" stroke-width="0.9"/><path d="M206.0 186 l1.5 1.8 1.5-1.8" fill="none" stroke="#42a463" stroke-width="0.9"/><path d="M222.0 186 l1.5 1.8 1.5-1.8" fill="none" stroke="#42a463" stroke-width="0.9"/><path d="M238.0 186 l1.5 1.8 1.5-1.8" fill="none" stroke="#42a463" stroke-width="0.9"/><path d="M254.0 186 l1.5 1.8 1.5-1.8" fill="none" stroke="#42a463" stroke-width="0.9"/><path d="M270.0 186 l1.5 1.8 1.5-1.8" fill="none" stroke="#42a463" stroke-width="0.9"/><path d="M286.0 186 l1.5 1.8 1.5-1.8" fill="none" stroke="#42a463" stroke-width="0.9"/><path d="M302.0 186 l1.5 1.8 1.5-1.8" fill="none" stroke="#42a463" stroke-width="0.9"/><path d="M318.0 186 l1.5 1.8 1.5-1.8" fill="none" stroke="#42a463" stroke-width="0.9"/><path d="M334.0 186 l1.5 1.8 1.5-1.8" fill="none" stroke="#42a463" stroke-width="0.9"/><path d="M350.0 186 l1.5 1.8 1.5-1.8" fill="none" stroke="#42a463" stroke-width="0.9"/><path d="M366.0 186 l1.5 1.8 1.5-1.8" fill="none" stroke="#42a463" stroke-width="0.9"/><path d="M382.0 186 l1.5 1.8 1.5-1.8" fill="none" stroke="#42a463" stroke-width="0.9"/><path d="M398.0 186 l1.5 1.8 1.5-1.8" fill="none" stroke="#42a463" stroke-width="0.9"/><path d="M414.0 186 l1.5 1.8 1.5-1.8" fill="none" stroke="#42a463" stroke-width="0.9"/><path d="M430.0 186 l1.5 1.8 1.5-1.8" fill="none" stroke="#42a463" stroke-width="0.9"/><path d="M446.0 186 l1.5 1.8 1.5-1.8" fill="none" stroke="#42a463" stroke-width="0.9"/><path d="M462.0 186 l1.5 1.8 1.5-1.8" fill="none" stroke="#42a463" stroke-width="0.9"/><path d="M478.0 186 l1.5 1.8 1.5-1.8" fill="none" stroke="#42a463" stroke-width="0.9"/><path d="M494.0 186 l1.5 1.8 1.5-1.8" fill="none" stroke="#42a463" stroke-width="0.9"/><path d="M510.0 186 l1.5 1.8 1.5-1.8" fill="none" stroke="#42a463" stroke-width="0.9"/><path d="M526.0 186 l1.5 1.8 1.5-1.8" fill="none" stroke="#42a463" stroke-width="0.9"/><path d="M542.0 186 l1.5 1.8 1.5-1.8" fill="none" stroke="#42a463" stroke-width="0.9"/><path d="M0 190l1-2.5 1 2.5" fill="#49ad62"/><path d="M4 190l1-2.5 1 2.5" fill="#49ad62"/><path d="M8 190l1-2.5 1 2.5" fill="#49ad62"/><path d="M12 190l1-2.5 1 2.5" fill="#49ad62"/><path d="M16 190l1-2.5 1 2.5" fill="#49ad62"/><path d="M20 190l1-2.5 1 2.5" fill="#49ad62"/><path d="M24 190l1-2.5 1 2.5" fill="#49ad62"/><path d="M28 190l1-2.5 1 2.5" fill="#49ad62"/><path d="M32 190l1-2.5 1 2.5" fill="#49ad62"/><path d="M36 190l1-2.5 1 2.5" fill="#49ad62"/><path d="M40 190l1-2.5 1 2.5" fill="#49ad62"/><path d="M44 190l1-2.5 1 2.5" fill="#49ad62"/><path d="M48 190l1-2.5 1 2.5" fill="#49ad62"/><path d="M52 190l1-2.5 1 2.5" fill="#49ad62"/><path d="M56 190l1-2.5 1 2.5" fill="#49ad62"/><path d="M60 190l1-2.5 1 2.5" fill="#49ad62"/><path d="M64 190l1-2.5 1 2.5" fill="#49ad62"/><path d="M68 190l1-2.5 1 2.5" fill="#49ad62"/><path d="M72 190l1-2.5 1 2.5" fill="#49ad62"/><path d="M76 190l1-2.5 1 2.5" fill="#49ad62"/><path d="M80 190l1-2.5 1 2.5" fill="#49ad62"/><path d="M84 190l1-2.5 1 2.5" fill="#49ad62"/><path d="M88 190l1-2.5 1 2.5" fill="#49ad62"/><path d="M92 190l1-2.5 1 2.5" fill="#49ad62"/><path d="M96 190l1-2.5 1 2.5" fill="#49ad62"/><path d="M100 190l1-2.5 1 2.5" fill="#49ad62"/><path d="M104 190l1-2.5 1 2.5" fill="#49ad62"/><path d="M108 190l1-2.5 1 2.5" fill="#49ad62"/><path d="M112 190l1-2.5 1 2.5" fill="#49ad62"/><path d="M116 190l1-2.5 1 2.5" fill="#49ad62"/><path d="M120 190l1-2.5 1 2.5" fill="#49ad62"/><path d="M124 190l1-2.5 1 2.5" fill="#49ad62"/><path d="M128 190l1-2.5 1 2.5" fill="#49ad62"/><path d="M132 190l1-2.5 1 2.5" fill="#49ad62"/><path d="M136 190l1-2.5 1 2.5" fill="#49ad62"/><path d="M140 190l1-2.5 1 2.5" fill="#49ad62"/><path d="M144 190l1-2.5 1 2.5" fill="#49ad62"/><path d="M148 190l1-2.5 1 2.5" fill="#49ad62"/><path d="M152 190l1-2.5 1 2.5" fill="#49ad62"/><path d="M156 190l1-2.5 1 2.5" fill="#49ad62"/><path d="M160 190l1-2.5 1 2.5" fill="#49ad62"/><path d="M164 190l1-2.5 1 2.5" fill="#49ad62"/><path d="M168 190l1-2.5 1 2.5" fill="#49ad62"/><path d="M172 190l1-2.5 1 2.5" fill="#49ad62"/><path d="M176 190l1-2.5 1 2.5" fill="#49ad62"/><path d="M180 190l1-2.5 1 2.5" fill="#49ad62"/><path d="M184 190l1-2.5 1 2.5" fill="#49ad62"/><path d="M188 190l1-2.5 1 2.5" fill="#49ad62"/><path d="M192 190l1-2.5 1 2.5" fill="#49ad62"/><path d="M196 190l1-2.5 1 2.5" fill="#49ad62"/><path d="M200 190l1-2.5 1 2.5" fill="#49ad62"/><path d="M204 190l1-2.5 1 2.5" fill="#49ad62"/><path d="M208 190l1-2.5 1 2.5" fill="#49ad62"/><path d="M212 190l1-2.5 1 2.5" fill="#49ad62"/><path d="M216 190l1-2.5 1 2.5" fill="#49ad62"/><path d="M220 190l1-2.5 1 2.5" fill="#49ad62"/><path d="M224 190l1-2.5 1 2.5" fill="#49ad62"/><path d="M228 190l1-2.5 1 2.5" fill="#49ad62"/><path d="M232 190l1-2.5 1 2.5" fill="#49ad62"/><path d="M236 190l1-2.5 1 2.5" fill="#49ad62"/><path d="M240 190l1-2.5 1 2.5" fill="#49ad62"/><path d="M244 190l1-2.5 1 2.5" fill="#49ad62"/><path d="M248 190l1-2.5 1 2.5" fill="#49ad62"/><path d="M252 190l1-2.5 1 2.5" fill="#49ad62"/><path d="M256 190l1-2.5 1 2.5" fill="#49ad62"/><path d="M260 190l1-2.5 1 2.5" fill="#49ad62"/><path d="M264 190l1-2.5 1 2.5" fill="#49ad62"/><path d="M268 190l1-2.5 1 2.5" fill="#49ad62"/><path d="M272 190l1-2.5 1 2.5" fill="#49ad62"/><path d="M276 190l1-2.5 1 2.5" fill="#49ad62"/><path d="M280 190l1-2.5 1 2.5" fill="#49ad62"/><path d="M284 190l1-2.5 1 2.5" fill="#49ad62"/><path d="M288 190l1-2.5 1 2.5" fill="#49ad62"/><path d="M292 190l1-2.5 1 2.5" fill="#49ad62"/><path d="M296 190l1-2.5 1 2.5" fill="#49ad62"/><path d="M300 190l1-2.5 1 2.5" fill="#49ad62"/><path d="M304 190l1-2.5 1 2.5" fill="#49ad62"/><path d="M308 190l1-2.5 1 2.5" fill="#49ad62"/><path d="M312 190l1-2.5 1 2.5" fill="#49ad62"/><path d="M316 190l1-2.5 1 2.5" fill="#49ad62"/><path d="M320 190l1-2.5 1 2.5" fill="#49ad62"/><path d="M324 190l1-2.5 1 2.5" fill="#49ad62"/><path d="M328 190l1-2.5 1 2.5" fill="#49ad62"/><path d="M332 190l1-2.5 1 2.5" fill="#49ad62"/><path d="M336 190l1-2.5 1 2.5" fill="#49ad62"/><path d="M340 190l1-2.5 1 2.5" fill="#49ad62"/><path d="M344 190l1-2.5 1 2.5" fill="#49ad62"/><path d="M348 190l1-2.5 1 2.5" fill="#49ad62"/><path d="M352 190l1-2.5 1 2.5" fill="#49ad62"/><path d="M356 190l1-2.5 1 2.5" fill="#49ad62"/><path d="M360 190l1-2.5 1 2.5" fill="#49ad62"/><path d="M364 190l1-2.5 1 2.5" fill="#49ad62"/><path d="M368 190l1-2.5 1 2.5" fill="#49ad62"/><path d="M372 190l1-2.5 1 2.5" fill="#49ad62"/><path d="M376 190l1-2.5 1 2.5" fill="#49ad62"/><path d="M380 190l1-2.5 1 2.5" fill="#49ad62"/><path d="M384 190l1-2.5 1 2.5" fill="#49ad62"/><path d="M388 190l1-2.5 1 2.5" fill="#49ad62"/><path d="M392 190l1-2.5 1 2.5" fill="#49ad62"/><path d="M396 190l1-2.5 1 2.5" fill="#49ad62"/><path d="M400 190l1-2.5 1 2.5" fill="#49ad62"/><path d="M404 190l1-2.5 1 2.5" fill="#49ad62"/><path d="M408 190l1-2.5 1 2.5" fill="#49ad62"/><path d="M412 190l1-2.5 1 2.5" fill="#49ad62"/><path d="M416 190l1-2.5 1 2.5" fill="#49ad62"/><path d="M420 190l1-2.5 1 2.5" fill="#49ad62"/><path d="M424 190l1-2.5 1 2.5" fill="#49ad62"/><path d="M428 190l1-2.5 1 2.5" fill="#49ad62"/><path d="M432 190l1-2.5 1 2.5" fill="#49ad62"/><path d="M436 190l1-2.5 1 2.5" fill="#49ad62"/><path d="M440 190l1-2.5 1 2.5" fill="#49ad62"/><path d="M444 190l1-2.5 1 2.5" fill="#49ad62"/><path d="M448 190l1-2.5 1 2.5" fill="#49ad62"/><path d="M452 190l1-2.5 1 2.5" fill="#49ad62"/><path d="M456 190l1-2.5 1 2.5" fill="#49ad62"/><path d="M460 190l1-2.5 1 2.5" fill="#49ad62"/><path d="M464 190l1-2.5 1 2.5" fill="#49ad62"/><path d="M468 190l1-2.5 1 2.5" fill="#49ad62"/><path d="M472 190l1-2.5 1 2.5" fill="#49ad62"/><path d="M476 190l1-2.5 1 2.5" fill="#49ad62"/><path d="M480 190l1-2.5 1 2.5" fill="#49ad62"/><path d="M484 190l1-2.5 1 2.5" fill="#49ad62"/><path d="M488 190l1-2.5 1 2.5" fill="#49ad62"/><path d="M492 190l1-2.5 1 2.5" fill="#49ad62"/><path d="M496 190l1-2.5 1 2.5" fill="#49ad62"/><rect x="0" y="189" width="500" height="1.5" fill="#4aae64"/><ellipse cx="2.0" cy="181.5" rx="6.5" ry="2.2" fill="#3a9c74"/><rect x="0.0" y="176.8" width="4" height="4.5" fill="#b67e52"/><ellipse cx="2.0" cy="172.0" rx="6.5" ry="5.6" fill="#5dc460" stroke="#2f8a6a" stroke-width="0.9"/><path d="M-4.5 175.4h13" stroke="#3aa078" stroke-width="1.4"/><ellipse cx="2.0" cy="168.6" rx="4" ry="1.6" fill="#b2e97c"/><ellipse cx="95.5" cy="182.5" rx="6.5" ry="2.2" fill="#3a9c74"/><rect x="93.5" y="177.8" width="4" height="4.5" fill="#b67e52"/><ellipse cx="95.5" cy="173.0" rx="6.5" ry="5.6" fill="#5dc460" stroke="#2f8a6a" stroke-width="0.9"/><path d="M89.0 176.4h13" stroke="#3aa078" stroke-width="1.4"/><ellipse cx="95.5" cy="169.6" rx="4" ry="1.6" fill="#b2e97c"/><ellipse cx="143.7" cy="182.5" rx="6.5" ry="2.2" fill="#3a9c74"/><rect x="141.7" y="177.8" width="4" height="4.5" fill="#b67e52"/><ellipse cx="143.7" cy="173.0" rx="6.5" ry="5.6" fill="#5dc460" stroke="#2f8a6a" stroke-width="0.9"/><path d="M137.2 176.4h13" stroke="#3aa078" stroke-width="1.4"/><ellipse cx="143.7" cy="169.6" rx="4" ry="1.6" fill="#b2e97c"/><ellipse cx="192.0" cy="181.5" rx="6.5" ry="2.2" fill="#3a9c74"/><rect x="190.0" y="176.8" width="4" height="4.5" fill="#b67e52"/><ellipse cx="192.0" cy="172.0" rx="6.5" ry="5.6" fill="#5dc460" stroke="#2f8a6a" stroke-width="0.9"/><path d="M185.5 175.4h13" stroke="#3aa078" stroke-width="1.4"/><ellipse cx="192.0" cy="168.6" rx="4" ry="1.6" fill="#b2e97c"/><ellipse cx="184.0" cy="188.9" rx="6.5" ry="2.2" fill="#3a9c74"/><rect x="182.0" y="184.2" width="4" height="4.5" fill="#b67e52"/><ellipse cx="184.0" cy="179.4" rx="6.5" ry="5.6" fill="#5dc460" stroke="#2f8a6a" stroke-width="0.9"/><path d="M177.5 182.8h13" stroke="#3aa078" stroke-width="1.4"/><ellipse cx="184.0" cy="176.0" rx="4" ry="1.6" fill="#b2e97c"/><ellipse cx="216.0" cy="172.8" rx="6.5" ry="2.2" fill="#3a9c74"/><rect x="214.0" y="168.1" width="4" height="4.5" fill="#b67e52"/><ellipse cx="216.0" cy="163.3" rx="6.5" ry="5.6" fill="#5dc460" stroke="#2f8a6a" stroke-width="0.9"/><path d="M209.5 166.7h13" stroke="#3aa078" stroke-width="1.4"/><ellipse cx="216.0" cy="159.9" rx="4" ry="1.6" fill="#b2e97c"/><ellipse cx="252.0" cy="181.5" rx="6.5" ry="2.2" fill="#3a9c74"/><rect x="250.0" y="176.8" width="4" height="4.5" fill="#b67e52"/><ellipse cx="252.0" cy="172.0" rx="6.5" ry="5.6" fill="#5dc460" stroke="#2f8a6a" stroke-width="0.9"/><path d="M245.5 175.4h13" stroke="#3aa078" stroke-width="1.4"/><ellipse cx="252.0" cy="168.6" rx="4" ry="1.6" fill="#b2e97c"/><ellipse cx="346.2" cy="182.5" rx="6.5" ry="2.2" fill="#3a9c74"/><rect x="344.2" y="177.8" width="4" height="4.5" fill="#b67e52"/><ellipse cx="346.2" cy="173.0" rx="6.5" ry="5.6" fill="#5dc460" stroke="#2f8a6a" stroke-width="0.9"/><path d="M339.7 176.4h13" stroke="#3aa078" stroke-width="1.4"/><ellipse cx="346.2" cy="169.6" rx="4" ry="1.6" fill="#b2e97c"/><ellipse cx="370.0" cy="173.5" rx="6.5" ry="2.2" fill="#3a9c74"/><rect x="368.0" y="168.8" width="4" height="4.5" fill="#b67e52"/><ellipse cx="370.0" cy="164.0" rx="6.5" ry="5.6" fill="#5dc460" stroke="#2f8a6a" stroke-width="0.9"/><path d="M363.5 167.4h13" stroke="#3aa078" stroke-width="1.4"/><ellipse cx="370.0" cy="160.6" rx="4" ry="1.6" fill="#b2e97c"/><ellipse cx="394.0" cy="181.5" rx="6.5" ry="2.2" fill="#3a9c74"/><rect x="392.0" y="176.8" width="4" height="4.5" fill="#b67e52"/><ellipse cx="394.0" cy="172.0" rx="6.5" ry="5.6" fill="#5dc460" stroke="#2f8a6a" stroke-width="0.9"/><path d="M387.5 175.4h13" stroke="#3aa078" stroke-width="1.4"/><ellipse cx="394.0" cy="168.6" rx="4" ry="1.6" fill="#b2e97c"/><ellipse cx="433.8" cy="189.5" rx="6.5" ry="2.2" fill="#3a9c74"/><rect x="431.8" y="184.8" width="4" height="4.5" fill="#b67e52"/><ellipse cx="433.8" cy="180.0" rx="6.5" ry="5.6" fill="#5dc460" stroke="#2f8a6a" stroke-width="0.9"/><path d="M427.3 183.4h13" stroke="#3aa078" stroke-width="1.4"/><ellipse cx="433.8" cy="176.6" rx="4" ry="1.6" fill="#b2e97c"/><ellipse cx="442.2" cy="181.0" rx="6.5" ry="2.2" fill="#3a9c74"/><rect x="440.2" y="176.3" width="4" height="4.5" fill="#b67e52"/><ellipse cx="442.2" cy="171.5" rx="6.5" ry="5.6" fill="#5dc460" stroke="#2f8a6a" stroke-width="0.9"/><path d="M435.7 174.9h13" stroke="#3aa078" stroke-width="1.4"/><ellipse cx="442.2" cy="168.1" rx="4" ry="1.6" fill="#b2e97c"/><ellipse cx="466.3" cy="172.5" rx="6.5" ry="2.2" fill="#3a9c74"/><rect x="464.3" y="167.8" width="4" height="4.5" fill="#b67e52"/><ellipse cx="466.3" cy="163.0" rx="6.5" ry="5.6" fill="#5dc460" stroke="#2f8a6a" stroke-width="0.9"/><path d="M459.8 166.4h13" stroke="#3aa078" stroke-width="1.4"/><ellipse cx="466.3" cy="159.6" rx="4" ry="1.6" fill="#b2e97c"/><ellipse cx="56.0" cy="189.0" rx="6" ry="2" fill="#3a9c74"/><rect x="54.2" y="185.5" width="3.5" height="3.5" fill="#b67e52"/><path d="M56.0 174.0l5 5h-2.5l5.5 4.5h-16l5.5-4.5h-2.5z" fill="#3d8f7e" stroke="#255a4c" stroke-width="0.8"/><path d="M52.0 179.5h8" stroke="#56a88e" stroke-width="1"/><ellipse cx="79.4" cy="173.0" rx="6" ry="2" fill="#3a9c74"/><rect x="77.7" y="169.5" width="3.5" height="3.5" fill="#b67e52"/><path d="M79.4 158.0l5 5h-2.5l5.5 4.5h-16l5.5-4.5h-2.5z" fill="#3d8f7e" stroke="#255a4c" stroke-width="0.8"/><path d="M75.4 163.5h8" stroke="#56a88e" stroke-width="1"/><ellipse cx="240.0" cy="183.5" rx="6" ry="2" fill="#3a9c74"/><rect x="238.2" y="180.0" width="3.5" height="3.5" fill="#b67e52"/><path d="M240.0 168.5l5 5h-2.5l5.5 4.5h-16l5.5-4.5h-2.5z" fill="#3d8f7e" stroke="#255a4c" stroke-width="0.8"/><path d="M236.0 174.0h8" stroke="#56a88e" stroke-width="1"/><ellipse cx="306.0" cy="190.8" rx="6" ry="2" fill="#3a9c74"/><rect x="304.2" y="187.3" width="3.5" height="3.5" fill="#b67e52"/><path d="M306.0 175.8l5 5h-2.5l5.5 4.5h-16l5.5-4.5h-2.5z" fill="#3d8f7e" stroke="#255a4c" stroke-width="0.8"/><path d="M302.0 181.3h8" stroke="#56a88e" stroke-width="1"/><ellipse cx="329.3" cy="174.7" rx="6" ry="2" fill="#3a9c74"/><rect x="327.6" y="171.2" width="3.5" height="3.5" fill="#b67e52"/><path d="M329.3 159.7l5 5h-2.5l5.5 4.5h-16l5.5-4.5h-2.5z" fill="#3d8f7e" stroke="#255a4c" stroke-width="0.8"/><path d="M325.3 165.2h8" stroke="#56a88e" stroke-width="1"/><ellipse cx="489.8" cy="182.3" rx="6" ry="2" fill="#3a9c74"/><rect x="488.1" y="178.8" width="3.5" height="3.5" fill="#b67e52"/><path d="M489.8 167.3l5 5h-2.5l5.5 4.5h-16l5.5-4.5h-2.5z" fill="#3d8f7e" stroke="#255a4c" stroke-width="0.8"/><path d="M485.8 172.8h8" stroke="#56a88e" stroke-width="1"/><path d="M9 173.5h3M10.5 172v3" stroke="#f6f6e8" stroke-width="1"/><rect x="10" y="173" width="1" height="1" fill="#e8d060"/><path d="M13 171.5h3M14.5 170v3" stroke="#f6f6e8" stroke-width="1"/><rect x="14" y="171" width="1" height="1" fill="#e8d060"/><path d="M26 172.5h3M27.5 171v3" stroke="#f6f6e8" stroke-width="1"/><rect x="27" y="172" width="1" height="1" fill="#e8d060"/><path d="M33 182.5h3M34.5 181v3" stroke="#f6f6e8" stroke-width="1"/><rect x="34" y="182" width="1" height="1" fill="#e8d060"/><path d="M37 180.5h3M38.5 179v3" stroke="#f6f6e8" stroke-width="1"/><rect x="38" y="180" width="1" height="1" fill="#e8d060"/><path d="M76 182.5h3M77.5 181v3" stroke="#f6f6e8" stroke-width="1"/><rect x="77" y="182" width="1" height="1" fill="#e8d060"/><path d="M80 180.5h3M81.5 179v3" stroke="#f6f6e8" stroke-width="1"/><rect x="81" y="180" width="1" height="1" fill="#e8d060"/><path d="M94 163.5h3M95.5 162v3" stroke="#f6f6e8" stroke-width="1"/><rect x="95" y="163" width="1" height="1" fill="#e8d060"/><path d="M98 161.5h3M99.5 160v3" stroke="#f6f6e8" stroke-width="1"/><rect x="99" y="161" width="1" height="1" fill="#e8d060"/><path d="M106 174.5h3M107.5 173v3" stroke="#f6f6e8" stroke-width="1"/><rect x="107" y="174" width="1" height="1" fill="#e8d060"/><path d="M110 172.5h3M111.5 171v3" stroke="#f6f6e8" stroke-width="1"/><rect x="111" y="172" width="1" height="1" fill="#e8d060"/><path d="M134 182.5h3M135.5 181v3" stroke="#f6f6e8" stroke-width="1"/><rect x="135" y="182" width="1" height="1" fill="#e8d060"/><path d="M138 180.5h3M139.5 179v3" stroke="#f6f6e8" stroke-width="1"/><rect x="139" y="180" width="1" height="1" fill="#e8d060"/><path d="M175 168.5h3M176.5 167v3" stroke="#f6f6e8" stroke-width="1"/><rect x="176" y="168" width="1" height="1" fill="#e8d060"/><path d="M179 166.5h3M180.5 165v3" stroke="#f6f6e8" stroke-width="1"/><rect x="180" y="166" width="1" height="1" fill="#e8d060"/><path d="M197 178.5h3M198.5 177v3" stroke="#f6f6e8" stroke-width="1"/><rect x="198" y="178" width="1" height="1" fill="#e8d060"/><path d="M201 176.5h3M202.5 175v3" stroke="#f6f6e8" stroke-width="1"/><rect x="202" y="176" width="1" height="1" fill="#e8d060"/><path d="M219 172.5h3M220.5 171v3" stroke="#f6f6e8" stroke-width="1"/><rect x="220" y="172" width="1" height="1" fill="#e8d060"/><path d="M223 170.5h3M224.5 169v3" stroke="#f6f6e8" stroke-width="1"/><rect x="224" y="170" width="1" height="1" fill="#e8d060"/><path d="M251 166.5h3M252.5 165v3" stroke="#f6f6e8" stroke-width="1"/><rect x="252" y="166" width="1" height="1" fill="#e8d060"/><path d="M255 164.5h3M256.5 163v3" stroke="#f6f6e8" stroke-width="1"/><rect x="256" y="164" width="1" height="1" fill="#e8d060"/><path d="M279 179.5h3M280.5 178v3" stroke="#f6f6e8" stroke-width="1"/><rect x="280" y="179" width="1" height="1" fill="#e8d060"/><path d="M283 177.5h3M284.5 176v3" stroke="#f6f6e8" stroke-width="1"/><rect x="284" y="177" width="1" height="1" fill="#e8d060"/><path d="M301 173.5h3M302.5 172v3" stroke="#f6f6e8" stroke-width="1"/><rect x="302" y="173" width="1" height="1" fill="#e8d060"/><path d="M305 171.5h3M306.5 170v3" stroke="#f6f6e8" stroke-width="1"/><rect x="306" y="171" width="1" height="1" fill="#e8d060"/><path d="M329 182.5h3M330.5 181v3" stroke="#f6f6e8" stroke-width="1"/><rect x="330" y="182" width="1" height="1" fill="#e8d060"/><path d="M333 180.5h3M334.5 179v3" stroke="#f6f6e8" stroke-width="1"/><rect x="334" y="180" width="1" height="1" fill="#e8d060"/><path d="M354 173.5h3M355.5 172v3" stroke="#f6f6e8" stroke-width="1"/><rect x="355" y="173" width="1" height="1" fill="#e8d060"/><path d="M358 171.5h3M359.5 170v3" stroke="#f6f6e8" stroke-width="1"/><rect x="359" y="171" width="1" height="1" fill="#e8d060"/><path d="M381 179.5h3M382.5 178v3" stroke="#f6f6e8" stroke-width="1"/><rect x="382" y="179" width="1" height="1" fill="#e8d060"/><path d="M385 177.5h3M386.5 176v3" stroke="#f6f6e8" stroke-width="1"/><rect x="386" y="177" width="1" height="1" fill="#e8d060"/><path d="M397 165.5h3M398.5 164v3" stroke="#f6f6e8" stroke-width="1"/><rect x="398" y="165" width="1" height="1" fill="#e8d060"/><path d="M401 163.5h3M402.5 162v3" stroke="#f6f6e8" stroke-width="1"/><rect x="402" y="163" width="1" height="1" fill="#e8d060"/><path d="M419 183.5h3M420.5 182v3" stroke="#f6f6e8" stroke-width="1"/><rect x="420" y="183" width="1" height="1" fill="#e8d060"/><path d="M423 181.5h3M424.5 180v3" stroke="#f6f6e8" stroke-width="1"/><rect x="424" y="181" width="1" height="1" fill="#e8d060"/><path d="M454 176.5h3M455.5 175v3" stroke="#f6f6e8" stroke-width="1"/><rect x="455" y="176" width="1" height="1" fill="#e8d060"/><path d="M458 174.5h3M459.5 173v3" stroke="#f6f6e8" stroke-width="1"/><rect x="459" y="174" width="1" height="1" fill="#e8d060"/><path d="M471 170.5h3M472.5 169v3" stroke="#f6f6e8" stroke-width="1"/><rect x="472" y="170" width="1" height="1" fill="#e8d060"/><path d="M475 168.5h3M476.5 167v3" stroke="#f6f6e8" stroke-width="1"/><rect x="476" y="168" width="1" height="1" fill="#e8d060"/><path d="M491 160.5h3M492.5 159v3" stroke="#f6f6e8" stroke-width="1"/><rect x="492" y="160" width="1" height="1" fill="#e8d060"/><path d="M495 158.5h3M496.5 157v3" stroke="#f6f6e8" stroke-width="1"/><rect x="496" y="158" width="1" height="1" fill="#e8d060"/><rect x="0" y="190.5" width="500" height="110" fill="#3b9487"/><rect x="93.5" y="134.5" width="31" height="31" rx="3.5" fill="#363d52" stroke="#1c2030" stroke-width="1"/><g transform="translate(93.0 134.0)"><path d="M4.6 12L5.2 9.2H8.6L10 8.6V5.6Q10 5 10.6 5H14Q14.6 5 14.8 5.6L15.2 7.8H16.8L17.2 5.6Q17.4 5 18 5H21.4Q22 5 22 5.6V8.6L23.4 9.2H26.8L27.4 12V20.5Q27.4 26.8 16 27.2 4.6 26.8 4.6 20.5Z" fill="#478cbf"/><circle cx="10.4" cy="15.8" r="2.6" fill="#b8bcc0"/><circle cx="21.6" cy="15.8" r="2.6" fill="#b8bcc0"/><path d="M8 16.8a2.4 1.5 0 0 0 4.8 0zM19.2 16.8a2.4 1.5 0 0 0 4.8 0z" fill="#2a2a2a"/><path d="M4.5 20.6H9V23H13.2V21.6H18.8V23H23V20.6H27.5" fill="none" stroke="#ffffff" stroke-width="1.2"/></g><g transform="translate(109 150)" stroke="#1d3550" stroke-width="0.9"><rect x="-1.2" y="-8" width="2.4" height="4" fill="#c8d0d8"/><rect x="-1.2" y="4" width="2.4" height="4" fill="#c8d0d8"/><circle r="3.6" fill="#b9c6d2"/></g><rect x="375.5" y="134.5" width="31" height="31" rx="3.5" fill="#053a1f" stroke="#022010" stroke-width="1"/><g transform="translate(375.0 134.0)"><path d="M4.6 12L5.2 9.2H8.6L10 8.6V5.6Q10 5 10.6 5H14Q14.6 5 14.8 5.6L15.2 7.8H16.8L17.2 5.6Q17.4 5 18 5H21.4Q22 5 22 5.6V8.6L23.4 9.2H26.8L27.4 12V20.5Q27.4 26.8 16 27.2 4.6 26.8 4.6 20.5Z" fill="#2ea84c"/><circle cx="10.4" cy="15.8" r="2.6" fill="#2ea84c"/><circle cx="21.6" cy="15.8" r="2.6" fill="#2ea84c"/><path d="M8 16.8a2.4 1.5 0 0 0 4.8 0zM19.2 16.8a2.4 1.5 0 0 0 4.8 0z" fill="#0a3018"/><path d="M4.5 20.6H9V23H13.2V21.6H18.8V23H23V20.6H27.5" fill="none" stroke="#1ee860" stroke-width="1.2"/></g><g transform="translate(382.5 149.8)" fill="none" stroke="#1ee860" stroke-width="1"><circle cx="3" cy="0" r="2.5"/><circle cx="14" cy="0" r="2.5"/></g><rect x="390" y="147" width="2" height="4" fill="#1ee860"/><g transform="translate(141 150)" opacity="0.55" stroke="#1f3a30" stroke-width="1"><rect x="-1.2" y="-8" width="2.4" height="4" fill="#e8e8e8"/><rect x="-1.2" y="4" width="2.4" height="4" fill="#e8e8e8"/><rect x="-8" y="-1.2" width="4" height="2.4" fill="#e8e8e8"/><rect x="4" y="-1.2" width="4" height="2.4" fill="#e8e8e8"/><circle r="3.6" fill="#e0e0e0"/></g></svg>
<div class="ab" style="left:521px;top:525px;width:500px;height:1px;background:#a57de8"></div>
<div class="ab" style="left:351px;top:225px;width:893px;height:1px;background:#c8374b"></div>
<div class="ab" style="left:521px;top:225px;width:500px;height:1px;background:#a34c96"></div>
<div class="ab" style="left:520px;top:61px;width:1px;height:608px;background:#76b41e"></div>
<div class="ab" style="left:520px;top:226px;width:1px;height:299px;background:#6e906e"></div>
<svg style="left:513px;top:218px" width="16" height="16" viewBox="0 0 16 16"><g stroke="#000" stroke-width="1.3" fill="#fff"><rect x="6" y="0.8" width="4" height="4.4" rx="0.6"/><rect x="6" y="10.8" width="4" height="4.4" rx="0.6"/><rect x="0.8" y="6" width="4.4" height="4" rx="0.6"/><rect x="10.8" y="6" width="4.4" height="4" rx="0.6"/><circle cx="8" cy="8" r="3.4" fill="#d6d6d6"/></g></svg>
</body></html>
